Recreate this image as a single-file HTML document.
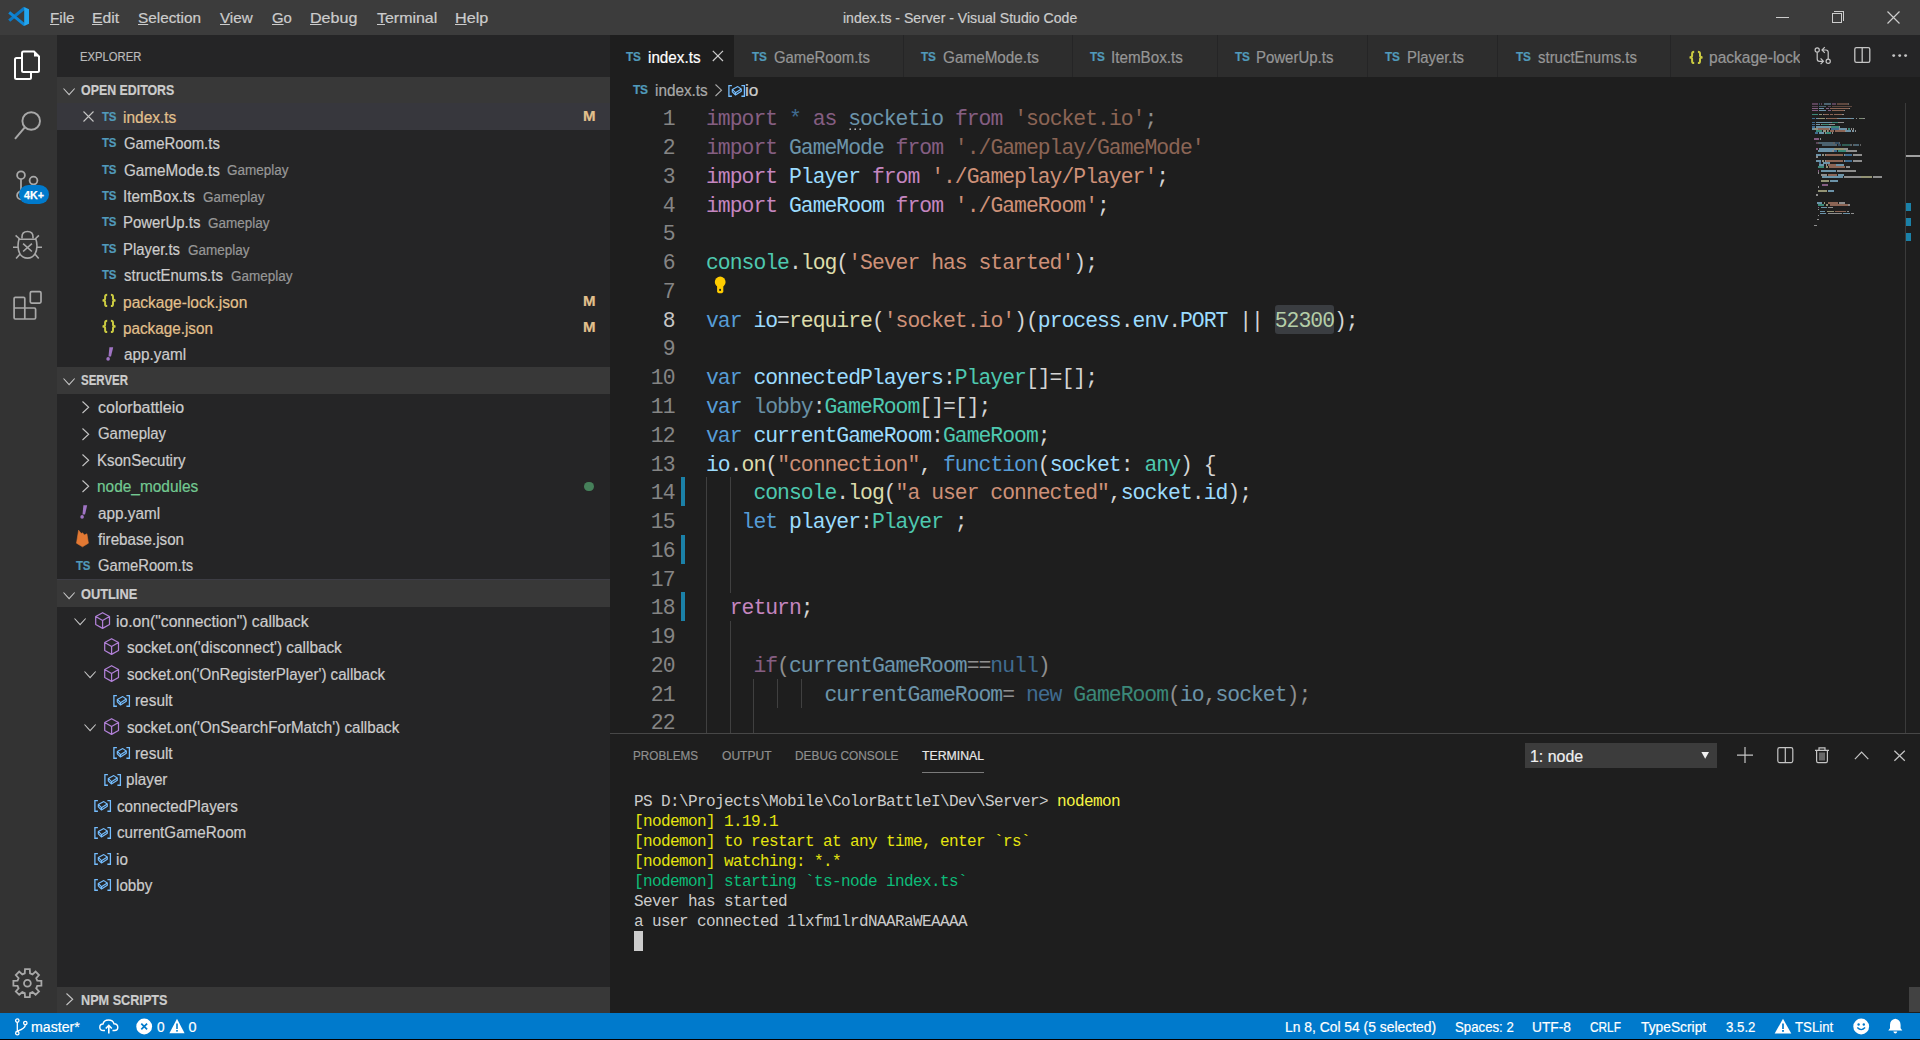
<!DOCTYPE html>
<html><head><meta charset="utf-8"><title>index.ts - Server - Visual Studio Code</title>
<style>
*{margin:0;padding:0;box-sizing:border-box}
html,body{width:1920px;height:1040px;overflow:hidden;background:#1e1e1e}
body{position:relative;font-family:'Liberation Sans',sans-serif;color:#cccccc}
.a{position:absolute}
.t{position:absolute;white-space:pre;line-height:1}
.t.s{-webkit-text-stroke:0.2px currentColor}
svg{position:absolute;overflow:visible}
</style></head>
<body>
<div class="a" style="left:0;top:0;width:1920px;height:35px;background:#3c3c3c"></div>
<svg style="left:0;top:0" width="36" height="35" viewBox="0 0 36 35">
<path d="M9.2 20.6 L24.6 8.0" stroke="#0b78c4" stroke-width="3.1"/>
<path d="M9.2 12.4 L24.6 24.9" stroke="#0f86d6" stroke-width="3.1"/>
<path d="M24.2 7 L29 9.2 V23.8 L24.2 26 Z" fill="#22a6f0"/>
</svg>
<div class="t s" style="left:49.77px;top:11.42px;font-family:'Liberation Sans',sans-serif;font-size:14.8px;line-height:14.8px;color:#cccccc;transform:scaleX(1.0259);transform-origin:0 0;"><span style="text-decoration:underline;text-underline-offset:1.2px;text-decoration-thickness:1px">F</span>ile</div>
<div class="t s" style="left:92.14px;top:11.42px;font-family:'Liberation Sans',sans-serif;font-size:14.8px;line-height:14.8px;color:#cccccc;transform:scaleX(1.0621);transform-origin:0 0;"><span style="text-decoration:underline;text-underline-offset:1.2px;text-decoration-thickness:1px">E</span>dit</div>
<div class="t s" style="left:138.20px;top:11.42px;font-family:'Liberation Sans',sans-serif;font-size:14.8px;line-height:14.8px;color:#cccccc;transform:scaleX(1.0356);transform-origin:0 0;"><span style="text-decoration:underline;text-underline-offset:1.2px;text-decoration-thickness:1px">S</span>election</div>
<div class="t s" style="left:220.20px;top:11.42px;font-family:'Liberation Sans',sans-serif;font-size:14.8px;line-height:14.8px;color:#cccccc;transform:scaleX(1.0274);transform-origin:0 0;"><span style="text-decoration:underline;text-underline-offset:1.2px;text-decoration-thickness:1px">V</span>iew</div>
<div class="t s" style="left:272.40px;top:11.42px;font-family:'Liberation Sans',sans-serif;font-size:14.8px;line-height:14.8px;color:#cccccc;transform:scaleX(1.0046);transform-origin:0 0;"><span style="text-decoration:underline;text-underline-offset:1.2px;text-decoration-thickness:1px">G</span>o</div>
<div class="t s" style="left:310.31px;top:11.42px;font-family:'Liberation Sans',sans-serif;font-size:14.8px;line-height:14.8px;color:#cccccc;transform:scaleX(1.0856);transform-origin:0 0;"><span style="text-decoration:underline;text-underline-offset:1.2px;text-decoration-thickness:1px">D</span>ebug</div>
<div class="t s" style="left:376.60px;top:11.42px;font-family:'Liberation Sans',sans-serif;font-size:14.8px;line-height:14.8px;color:#cccccc;transform:scaleX(1.0768);transform-origin:0 0;"><span style="text-decoration:underline;text-underline-offset:1.2px;text-decoration-thickness:1px">T</span>erminal</div>
<div class="t s" style="left:455.01px;top:11.42px;font-family:'Liberation Sans',sans-serif;font-size:14.8px;line-height:14.8px;color:#cccccc;transform:scaleX(1.0924);transform-origin:0 0;"><span style="text-decoration:underline;text-underline-offset:1.2px;text-decoration-thickness:1px">H</span>elp</div>
<div class="t s" style="left:842.90px;top:11.16px;font-family:'Liberation Sans',sans-serif;font-size:14.4px;line-height:14.4px;color:#cccccc;transform:scaleX(0.9771);transform-origin:0 0;">index.ts - Server - Visual Studio Code</div>
<div class="a" style="left:1776px;top:17px;width:13px;height:1px;background:#cccccc"></div>
<div class="a" style="left:1832px;top:13px;width:10px;height:10px;border:1px solid #cccccc"></div>
<div class="a" style="left:1834px;top:11px;width:10px;height:10px;border-top:1px solid #cccccc;border-right:1px solid #cccccc"></div>
<svg style="left:1887px;top:11px" width="13" height="13" viewBox="0 0 13 13"><path d="M0.5 0.5 L12.5 12.5 M12.5 0.5 L0.5 12.5" stroke="#cccccc" stroke-width="1.2"/></svg>
<div class="a" style="left:0;top:35px;width:57px;height:978px;background:#333333"></div>
<svg style="left:0;top:35px" width="57" height="60" viewBox="0 35 57 60">
<path d="M21.5 58 H16.5 Q15 58 15 59.5 V77.5 Q15 79 16.5 79 H29.5 Q31 79 31 77.5 V72.5" fill="none" stroke="#ffffff" stroke-width="2"/>
<path d="M23.5 51.5 H34 L39 56.5 V70.5 Q39 72 37.5 72 H23.5 Q22 72 22 70.5 V53 Q22 51.5 23.5 51.5 Z" fill="none" stroke="#ffffff" stroke-width="2"/>
<path d="M34 51.5 V56.5 H39 Z" fill="#ffffff"/>
</svg>
<svg style="left:0;top:95px" width="57" height="60" viewBox="0 95 57 60">
<circle cx="31.2" cy="121" r="8.8" fill="none" stroke="#a8a8a8" stroke-width="1.9"/>
<path d="M24.6 127.6 L15 138.8" stroke="#a8a8a8" stroke-width="2" stroke-linecap="butt"/>
</svg>
<svg style="left:0;top:155px" width="57" height="60" viewBox="0 155 57 60">
<circle cx="21" cy="175.2" r="3.9" fill="none" stroke="#a8a8a8" stroke-width="1.8"/>
<circle cx="33.5" cy="180.6" r="3.9" fill="none" stroke="#a8a8a8" stroke-width="1.8"/>
<circle cx="21" cy="195.4" r="3.9" fill="none" stroke="#a8a8a8" stroke-width="1.8"/>
<path d="M21 179.1 V191.5" stroke="#a8a8a8" stroke-width="1.8"/>
</svg>
<div class="a" style="left:19px;top:185px;width:30px;height:19px;border-radius:9.5px;background:#007acc"></div>
<div class="t s" style="left:24.20px;top:190.42px;font-family:'Liberation Sans',sans-serif;font-size:10.8px;line-height:10.8px;color:#ffffff;transform:scaleX(0.9898);transform-origin:0 0;font-weight:bold;-webkit-text-stroke:0.25px #ffffff">4K+</div>
<svg style="left:0;top:215px" width="57" height="60" viewBox="0 215 57 60">
<path d="M22 238.6 V236.8 Q22 231.5 27.5 231.5 Q33 231.5 33 236.8 V238.6" fill="none" stroke="#a8a8a8" stroke-width="1.6"/>
<path d="M19 239.2 H35.9 C37.3 243 37.5 250 35.1 253.8 C33.1 257 30.5 258.1 27.5 258.1 C24.5 258.1 21.9 257 19.9 253.8 C17.5 250 17.7 243 19 239.2 Z" fill="none" stroke="#a8a8a8" stroke-width="1.6"/>
<path d="M23.1 243.6 L31.9 251.5 M31.9 243.6 L23.1 251.5" stroke="#a8a8a8" stroke-width="1.6"/>
<path d="M15.6 235.4 L19.6 239 M38.9 235.4 L35.2 239 M13 247.3 H18 M42 247.3 H37 M16.1 258.5 L20.3 253.7 M38.7 258.5 L34.7 253.7" stroke="#a8a8a8" stroke-width="1.6"/>
</svg>
<svg style="left:0;top:275px" width="57" height="60" viewBox="0 275 57 60">
<path d="M14.1 298.5 Q14.1 297.3 15.3 297.3 H23.6 Q24.8 297.3 24.8 298.5 V308 H34.4 Q35.6 308 35.6 309.2 V317.8 Q35.6 319 34.4 319 H15.3 Q14.1 319 14.1 317.8 Z M14.1 308 H24.8 V319" fill="none" stroke="#a8a8a8" stroke-width="1.7"/>
<rect x="30.3" y="291.7" width="10.7" height="11.4" rx="1.3" fill="none" stroke="#a8a8a8" stroke-width="1.7"/>
</svg>
<svg style="left:0;top:955px" width="57" height="57" viewBox="0 955 57 57">
<polygon points="24.78,973.34 25.00,969.20 29.80,969.20 30.02,973.34 32.52,974.38 35.60,971.61 38.99,975.00 36.22,978.08 37.26,980.58 41.40,980.80 41.40,985.60 37.26,985.82 36.22,988.32 38.99,991.40 35.60,994.79 32.52,992.02 30.02,993.06 29.80,997.20 25.00,997.20 24.78,993.06 22.28,992.02 19.20,994.79 15.81,991.40 18.58,988.32 17.54,985.82 13.40,985.60 13.40,980.80 17.54,980.58 18.58,978.08 15.81,975.00 19.20,971.61 22.28,974.38" fill="none" stroke="#a8a8a8" stroke-width="1.8" stroke-linejoin="miter"/>
<circle cx="27.4" cy="983.2" r="3.4" fill="none" stroke="#a8a8a8" stroke-width="1.8"/>
</svg>
<div class="a" style="left:57px;top:35px;width:553px;height:978px;background:#252526"></div>
<div class="t s" style="left:79.85px;top:49.88px;font-family:'Liberation Sans',sans-serif;font-size:13.2px;line-height:13.2px;color:#bbbbbb;transform:scaleX(0.8535);transform-origin:0 0;">EXPLORER</div>
<div class="a" style="left:57px;top:77px;width:553px;height:26.4px;background:#383838"></div>
<svg style="left:62.8px;top:88.3px" width="12.2" height="7.2" viewBox="0 0 12.2 7.2"><path d="M0.5 0.5 L6.1 6.7 L11.7 0.5" fill="none" stroke="#c5c5c5" stroke-width="1.1"/></svg>
<div class="t s" style="left:80.70px;top:84.37px;font-family:'Liberation Sans',sans-serif;font-size:13.8px;line-height:13.8px;color:#cccccc;transform:scaleX(0.8969);transform-origin:0 0;font-weight:bold">OPEN EDITORS</div>
<div class="a" style="left:57px;top:103.4px;width:553px;height:26.4px;background:#37373d"></div>
<svg style="left:82.5px;top:111.30000000000001px" width="11" height="11" viewBox="0 0 11 11"><path d="M0.5 0.5 L10.5 10.5 M10.5 0.5 L0.5 10.5" stroke="#c5c5c5" stroke-width="1.1"/></svg>
<div class="t s" style="left:102.20px;top:110.79px;font-family:'Liberation Sans',sans-serif;font-size:12.6px;line-height:12.6px;color:#519aba;transform:scaleX(0.9101);transform-origin:0 0;font-weight:bold;letter-spacing:-0.2px">TS</div>
<div class="t s" style="left:123.21px;top:109.84px;font-family:'Liberation Sans',sans-serif;font-size:15.6px;line-height:15.6px;color:#e2c08d;transform:scaleX(0.9916);transform-origin:0 0;">index.ts</div>
<div class="t s" style="left:583.00px;top:108.82px;font-family:'Liberation Sans',sans-serif;font-size:14.8px;line-height:14.8px;color:#e2c08d;transform:scaleX(1.0167);transform-origin:0 0;font-weight:bold">M</div>
<div class="t s" style="left:102.20px;top:137.19px;font-family:'Liberation Sans',sans-serif;font-size:12.6px;line-height:12.6px;color:#519aba;transform:scaleX(0.9101);transform-origin:0 0;font-weight:bold;letter-spacing:-0.2px">TS</div>
<div class="t s" style="left:124.20px;top:136.24px;font-family:'Liberation Sans',sans-serif;font-size:15.6px;line-height:15.6px;color:#cccccc;transform:scaleX(0.9531);transform-origin:0 0;">GameRoom.ts</div>
<div class="t s" style="left:102.20px;top:163.59px;font-family:'Liberation Sans',sans-serif;font-size:12.6px;line-height:12.6px;color:#519aba;transform:scaleX(0.9101);transform-origin:0 0;font-weight:bold;letter-spacing:-0.2px">TS</div>
<div class="t s" style="left:124.20px;top:162.64px;font-family:'Liberation Sans',sans-serif;font-size:15.6px;line-height:15.6px;color:#cccccc;transform:scaleX(0.9782);transform-origin:0 0;">GameMode.ts</div>
<div class="t s" style="left:226.90px;top:163.37px;font-family:'Liberation Sans',sans-serif;font-size:14.04px;line-height:14.04px;color:#979797;transform:scaleX(0.9619);transform-origin:0 0;">Gameplay</div>
<div class="t s" style="left:102.20px;top:189.99px;font-family:'Liberation Sans',sans-serif;font-size:12.6px;line-height:12.6px;color:#519aba;transform:scaleX(0.9101);transform-origin:0 0;font-weight:bold;letter-spacing:-0.2px">TS</div>
<div class="t s" style="left:123.23px;top:189.04px;font-family:'Liberation Sans',sans-serif;font-size:15.6px;line-height:15.6px;color:#cccccc;transform:scaleX(0.9744);transform-origin:0 0;">ItemBox.ts</div>
<div class="t s" style="left:202.50px;top:189.77px;font-family:'Liberation Sans',sans-serif;font-size:14.04px;line-height:14.04px;color:#979797;transform:scaleX(0.9619);transform-origin:0 0;">Gameplay</div>
<div class="t s" style="left:102.20px;top:216.39px;font-family:'Liberation Sans',sans-serif;font-size:12.6px;line-height:12.6px;color:#519aba;transform:scaleX(0.9101);transform-origin:0 0;font-weight:bold;letter-spacing:-0.2px">TS</div>
<div class="t s" style="left:123.24px;top:215.44px;font-family:'Liberation Sans',sans-serif;font-size:15.6px;line-height:15.6px;color:#cccccc;transform:scaleX(0.9599);transform-origin:0 0;">PowerUp.ts</div>
<div class="t s" style="left:208.10px;top:216.17px;font-family:'Liberation Sans',sans-serif;font-size:14.04px;line-height:14.04px;color:#979797;transform:scaleX(0.9619);transform-origin:0 0;">Gameplay</div>
<div class="t s" style="left:102.20px;top:242.79px;font-family:'Liberation Sans',sans-serif;font-size:12.6px;line-height:12.6px;color:#519aba;transform:scaleX(0.9101);transform-origin:0 0;font-weight:bold;letter-spacing:-0.2px">TS</div>
<div class="t s" style="left:123.25px;top:241.84px;font-family:'Liberation Sans',sans-serif;font-size:15.6px;line-height:15.6px;color:#cccccc;transform:scaleX(0.9525);transform-origin:0 0;">Player.ts</div>
<div class="t s" style="left:187.75px;top:242.57px;font-family:'Liberation Sans',sans-serif;font-size:14.04px;line-height:14.04px;color:#979797;transform:scaleX(0.9619);transform-origin:0 0;">Gameplay</div>
<div class="t s" style="left:102.20px;top:269.19px;font-family:'Liberation Sans',sans-serif;font-size:12.6px;line-height:12.6px;color:#519aba;transform:scaleX(0.9101);transform-origin:0 0;font-weight:bold;letter-spacing:-0.2px">TS</div>
<div class="t s" style="left:124.20px;top:268.24px;font-family:'Liberation Sans',sans-serif;font-size:15.6px;line-height:15.6px;color:#cccccc;transform:scaleX(0.9591);transform-origin:0 0;">structEnums.ts</div>
<div class="t s" style="left:230.60px;top:268.97px;font-family:'Liberation Sans',sans-serif;font-size:14.04px;line-height:14.04px;color:#979797;transform:scaleX(0.9619);transform-origin:0 0;">Gameplay</div>
<svg style="left:102px;top:294.0px" width="15" height="13" viewBox="0 0 15 13"><path d="M5.2 0.8 Q3.1 0.8 3.1 2.7 V4.8 Q3.1 6.1 0.6 6.4 Q3.1 6.7 3.1 8 V10.2 Q3.1 12.1 5.2 12.1 M8.9 0.8 Q11 0.8 11 2.7 V4.8 Q11 6.1 13.5 6.4 Q11 6.7 11 8 V10.2 Q11 12.1 8.9 12.1" fill="none" stroke="#cbcb41" stroke-width="2" stroke-linejoin="miter"/></svg>
<div class="t s" style="left:123.20px;top:294.64px;font-family:'Liberation Sans',sans-serif;font-size:15.6px;line-height:15.6px;color:#e2c08d;transform:scaleX(0.9964);transform-origin:0 0;">package-lock.json</div>
<div class="t s" style="left:583.00px;top:293.62px;font-family:'Liberation Sans',sans-serif;font-size:14.8px;line-height:14.8px;color:#e2c08d;transform:scaleX(1.0167);transform-origin:0 0;font-weight:bold">M</div>
<svg style="left:102px;top:320.40000000000003px" width="15" height="13" viewBox="0 0 15 13"><path d="M5.2 0.8 Q3.1 0.8 3.1 2.7 V4.8 Q3.1 6.1 0.6 6.4 Q3.1 6.7 3.1 8 V10.2 Q3.1 12.1 5.2 12.1 M8.9 0.8 Q11 0.8 11 2.7 V4.8 Q11 6.1 13.5 6.4 Q11 6.7 11 8 V10.2 Q11 12.1 8.9 12.1" fill="none" stroke="#cbcb41" stroke-width="2" stroke-linejoin="miter"/></svg>
<div class="t s" style="left:123.22px;top:321.04px;font-family:'Liberation Sans',sans-serif;font-size:15.6px;line-height:15.6px;color:#e2c08d;transform:scaleX(0.9787);transform-origin:0 0;">package.json</div>
<div class="t s" style="left:583.00px;top:320.02px;font-family:'Liberation Sans',sans-serif;font-size:14.8px;line-height:14.8px;color:#e2c08d;transform:scaleX(1.0167);transform-origin:0 0;font-weight:bold">M</div>
<svg style="left:105.8px;top:347.0px" width="8" height="14" viewBox="0 0 8 14"><path d="M3.4 0.3 H7.2 L5.0 9.4 H2.5 Z" fill="#a074c4"/><circle cx="2.1" cy="11.9" r="1.8" fill="#a074c4"/></svg>
<div class="t s" style="left:124.20px;top:347.44px;font-family:'Liberation Sans',sans-serif;font-size:15.6px;line-height:15.6px;color:#cccccc;transform:scaleX(0.9808);transform-origin:0 0;">app.yaml</div>
<div class="a" style="left:57px;top:366.9px;width:553px;height:26.9px;background:#383838"></div>
<svg style="left:62.8px;top:378.2px" width="12.2" height="7.2" viewBox="0 0 12.2 7.2"><path d="M0.5 0.5 L6.1 6.7 L11.7 0.5" fill="none" stroke="#c5c5c5" stroke-width="1.1"/></svg>
<div class="t s" style="left:80.70px;top:374.27px;font-family:'Liberation Sans',sans-serif;font-size:13.8px;line-height:13.8px;color:#cccccc;transform:scaleX(0.8333);transform-origin:0 0;font-weight:bold">SERVER</div>
<svg style="left:82px;top:401.2px" width="7.2" height="12.5" viewBox="0 0 7.2 12.5"><path d="M0.5 0.5 L6.7 6.25 L0.5 12.0" fill="none" stroke="#c5c5c5" stroke-width="1.1"/></svg>
<div class="t s" style="left:97.70px;top:400.04px;font-family:'Liberation Sans',sans-serif;font-size:15.6px;line-height:15.6px;color:#cccccc;transform:scaleX(1.0248);transform-origin:0 0;">colorbattleio</div>
<svg style="left:82px;top:427.59999999999997px" width="7.2" height="12.5" viewBox="0 0 7.2 12.5"><path d="M0.5 0.5 L6.7 6.25 L0.5 12.0" fill="none" stroke="#c5c5c5" stroke-width="1.1"/></svg>
<div class="t s" style="left:97.70px;top:426.44px;font-family:'Liberation Sans',sans-serif;font-size:15.6px;line-height:15.6px;color:#cccccc;transform:scaleX(0.9569);transform-origin:0 0;">Gameplay</div>
<svg style="left:82px;top:454.0px" width="7.2" height="12.5" viewBox="0 0 7.2 12.5"><path d="M0.5 0.5 L6.7 6.25 L0.5 12.0" fill="none" stroke="#c5c5c5" stroke-width="1.1"/></svg>
<div class="t s" style="left:96.74px;top:452.84px;font-family:'Liberation Sans',sans-serif;font-size:15.6px;line-height:15.6px;color:#cccccc;transform:scaleX(0.9629);transform-origin:0 0;">KsonSecutiry</div>
<svg style="left:82px;top:480.4px" width="7.2" height="12.5" viewBox="0 0 7.2 12.5"><path d="M0.5 0.5 L6.7 6.25 L0.5 12.0" fill="none" stroke="#c5c5c5" stroke-width="1.1"/></svg>
<div class="t s" style="left:96.71px;top:479.24px;font-family:'Liberation Sans',sans-serif;font-size:15.6px;line-height:15.6px;color:#73c991;transform:scaleX(0.9891);transform-origin:0 0;">node_modules</div>
<div class="a" style="left:584px;top:481.8px;width:9.5px;height:9.5px;border-radius:50%;background:#46805a"></div>
<svg style="left:79.6px;top:505.4px" width="8" height="14" viewBox="0 0 8 14"><path d="M3.4 0.3 H7.2 L5.0 9.4 H2.5 Z" fill="#a074c4"/><circle cx="2.1" cy="11.9" r="1.8" fill="#a074c4"/></svg>
<div class="t s" style="left:97.70px;top:505.64px;font-family:'Liberation Sans',sans-serif;font-size:15.6px;line-height:15.6px;color:#cccccc;transform:scaleX(0.9808);transform-origin:0 0;">app.yaml</div>
<svg style="left:70px;top:525.00px" width="25" height="25" viewBox="0 0 25 25"><path d="M8.6 5.2 L11.2 8.6 L12.5 7.8 L14.4 10 L16.9 8.8 L18.4 18.2 L12.5 21.8 L6.5 18.2 Z" fill="#e37933" stroke="#e37933" stroke-width="0.6" stroke-linejoin="round"/></svg>
<div class="t s" style="left:97.70px;top:532.04px;font-family:'Liberation Sans',sans-serif;font-size:15.6px;line-height:15.6px;color:#cccccc;transform:scaleX(0.9733);transform-origin:0 0;">firebase.json</div>
<div class="t s" style="left:75.70px;top:559.59px;font-family:'Liberation Sans',sans-serif;font-size:12.6px;line-height:12.6px;color:#519aba;transform:scaleX(0.9101);transform-origin:0 0;font-weight:bold;letter-spacing:-0.2px">TS</div>
<div class="t s" style="left:97.70px;top:558.44px;font-family:'Liberation Sans',sans-serif;font-size:15.6px;line-height:15.6px;color:#cccccc;transform:scaleX(0.9471);transform-origin:0 0;">GameRoom.ts</div>
<div class="a" style="left:57px;top:579px;width:553px;height:27.6px;background:#383838"></div>
<div class="a" style="left:57px;top:579px;width:553px;height:1.3px;background:#3d3d44"></div>
<svg style="left:62.8px;top:592.2px" width="12.2" height="7.2" viewBox="0 0 12.2 7.2"><path d="M0.5 0.5 L6.1 6.7 L11.7 0.5" fill="none" stroke="#c5c5c5" stroke-width="1.1"/></svg>
<div class="t s" style="left:80.70px;top:588.27px;font-family:'Liberation Sans',sans-serif;font-size:13.8px;line-height:13.8px;color:#cccccc;transform:scaleX(0.9280);transform-origin:0 0;font-weight:bold">OUTLINE</div>
<svg style="left:73.8px;top:617.9px" width="12.2" height="7.2" viewBox="0 0 12.2 7.2"><path d="M0.5 0.5 L6.1 6.7 L11.7 0.5" fill="none" stroke="#c5c5c5" stroke-width="1.1"/></svg>
<svg style="left:95.1px;top:612.0px" width="16" height="18" viewBox="0 0 16 18"><path d="M7.6 0.7 L14.5 4.5 V12.5 L7.6 16.4 L0.7 12.5 V4.5 Z M0.7 4.5 L7.6 8.5 L14.5 4.5 M7.6 8.5 V16.4" fill="none" stroke="#b180d7" stroke-width="1.25" stroke-linejoin="round"/></svg>
<div class="t s" style="left:115.69px;top:613.94px;font-family:'Liberation Sans',sans-serif;font-size:15.6px;line-height:15.6px;color:#cccccc;transform:scaleX(1.0059);transform-origin:0 0;">io.on("connection") callback</div>
<svg style="left:104.2px;top:638.4px" width="16" height="18" viewBox="0 0 16 18"><path d="M7.6 0.7 L14.5 4.5 V12.5 L7.6 16.4 L0.7 12.5 V4.5 Z M0.7 4.5 L7.6 8.5 L14.5 4.5 M7.6 8.5 V16.4" fill="none" stroke="#b180d7" stroke-width="1.25" stroke-linejoin="round"/></svg>
<div class="t s" style="left:126.70px;top:640.34px;font-family:'Liberation Sans',sans-serif;font-size:15.6px;line-height:15.6px;color:#cccccc;transform:scaleX(0.9839);transform-origin:0 0;">socket.on('disconnect') callback</div>
<svg style="left:83.6px;top:670.6999999999999px" width="12.2" height="7.2" viewBox="0 0 12.2 7.2"><path d="M0.5 0.5 L6.1 6.7 L11.7 0.5" fill="none" stroke="#c5c5c5" stroke-width="1.1"/></svg>
<svg style="left:104.2px;top:664.8px" width="16" height="18" viewBox="0 0 16 18"><path d="M7.6 0.7 L14.5 4.5 V12.5 L7.6 16.4 L0.7 12.5 V4.5 Z M0.7 4.5 L7.6 8.5 L14.5 4.5 M7.6 8.5 V16.4" fill="none" stroke="#b180d7" stroke-width="1.25" stroke-linejoin="round"/></svg>
<div class="t s" style="left:126.70px;top:666.74px;font-family:'Liberation Sans',sans-serif;font-size:15.6px;line-height:15.6px;color:#cccccc;transform:scaleX(0.9673);transform-origin:0 0;">socket.on('OnRegisterPlayer') callback</div>
<svg style="left:113.20px;top:694.60px" width="18" height="13" viewBox="0 0 18 13"><path d="M3.9 0.65 H0.9 V11.25 H3.9 M13.4 0.65 H16.4 V11.25 H13.4" fill="none" stroke="#75beff" stroke-width="1.3"/><path d="M4.3 4.4 L9.8 1.6 L13.3 4.0 L7.5 7.7 Z M4.3 4.4 V6.9 L7.5 10 L13.3 6.2 V4.0 M7.5 7.7 V10" fill="none" stroke="#75beff" stroke-width="1.15" stroke-linejoin="round"/></svg>
<div class="t s" style="left:135.31px;top:693.14px;font-family:'Liberation Sans',sans-serif;font-size:15.6px;line-height:15.6px;color:#cccccc;transform:scaleX(0.9868);transform-origin:0 0;">result</div>
<svg style="left:83.6px;top:723.5px" width="12.2" height="7.2" viewBox="0 0 12.2 7.2"><path d="M0.5 0.5 L6.1 6.7 L11.7 0.5" fill="none" stroke="#c5c5c5" stroke-width="1.1"/></svg>
<svg style="left:104.2px;top:717.6px" width="16" height="18" viewBox="0 0 16 18"><path d="M7.6 0.7 L14.5 4.5 V12.5 L7.6 16.4 L0.7 12.5 V4.5 Z M0.7 4.5 L7.6 8.5 L14.5 4.5 M7.6 8.5 V16.4" fill="none" stroke="#b180d7" stroke-width="1.25" stroke-linejoin="round"/></svg>
<div class="t s" style="left:126.70px;top:719.54px;font-family:'Liberation Sans',sans-serif;font-size:15.6px;line-height:15.6px;color:#cccccc;transform:scaleX(0.9731);transform-origin:0 0;">socket.on('OnSearchForMatch') callback</div>
<svg style="left:113.20px;top:747.40px" width="18" height="13" viewBox="0 0 18 13"><path d="M3.9 0.65 H0.9 V11.25 H3.9 M13.4 0.65 H16.4 V11.25 H13.4" fill="none" stroke="#75beff" stroke-width="1.3"/><path d="M4.3 4.4 L9.8 1.6 L13.3 4.0 L7.5 7.7 Z M4.3 4.4 V6.9 L7.5 10 L13.3 6.2 V4.0 M7.5 7.7 V10" fill="none" stroke="#75beff" stroke-width="1.15" stroke-linejoin="round"/></svg>
<div class="t s" style="left:135.31px;top:745.94px;font-family:'Liberation Sans',sans-serif;font-size:15.6px;line-height:15.6px;color:#cccccc;transform:scaleX(0.9868);transform-origin:0 0;">result</div>
<svg style="left:103.50px;top:773.80px" width="18" height="13" viewBox="0 0 18 13"><path d="M3.9 0.65 H0.9 V11.25 H3.9 M13.4 0.65 H16.4 V11.25 H13.4" fill="none" stroke="#75beff" stroke-width="1.3"/><path d="M4.3 4.4 L9.8 1.6 L13.3 4.0 L7.5 7.7 Z M4.3 4.4 V6.9 L7.5 10 L13.3 6.2 V4.0 M7.5 7.7 V10" fill="none" stroke="#75beff" stroke-width="1.15" stroke-linejoin="round"/></svg>
<div class="t s" style="left:125.73px;top:772.34px;font-family:'Liberation Sans',sans-serif;font-size:15.6px;line-height:15.6px;color:#cccccc;transform:scaleX(0.9750);transform-origin:0 0;">player</div>
<svg style="left:93.80px;top:800.20px" width="18" height="13" viewBox="0 0 18 13"><path d="M3.9 0.65 H0.9 V11.25 H3.9 M13.4 0.65 H16.4 V11.25 H13.4" fill="none" stroke="#75beff" stroke-width="1.3"/><path d="M4.3 4.4 L9.8 1.6 L13.3 4.0 L7.5 7.7 Z M4.3 4.4 V6.9 L7.5 10 L13.3 6.2 V4.0 M7.5 7.7 V10" fill="none" stroke="#75beff" stroke-width="1.15" stroke-linejoin="round"/></svg>
<div class="t s" style="left:116.70px;top:798.74px;font-family:'Liberation Sans',sans-serif;font-size:15.6px;line-height:15.6px;color:#cccccc;transform:scaleX(0.9750);transform-origin:0 0;">connectedPlayers</div>
<svg style="left:93.80px;top:826.60px" width="18" height="13" viewBox="0 0 18 13"><path d="M3.9 0.65 H0.9 V11.25 H3.9 M13.4 0.65 H16.4 V11.25 H13.4" fill="none" stroke="#75beff" stroke-width="1.3"/><path d="M4.3 4.4 L9.8 1.6 L13.3 4.0 L7.5 7.7 Z M4.3 4.4 V6.9 L7.5 10 L13.3 6.2 V4.0 M7.5 7.7 V10" fill="none" stroke="#75beff" stroke-width="1.15" stroke-linejoin="round"/></svg>
<div class="t s" style="left:116.70px;top:825.14px;font-family:'Liberation Sans',sans-serif;font-size:15.6px;line-height:15.6px;color:#cccccc;transform:scaleX(0.9750);transform-origin:0 0;">currentGameRoom</div>
<svg style="left:93.80px;top:853.00px" width="18" height="13" viewBox="0 0 18 13"><path d="M3.9 0.65 H0.9 V11.25 H3.9 M13.4 0.65 H16.4 V11.25 H13.4" fill="none" stroke="#75beff" stroke-width="1.3"/><path d="M4.3 4.4 L9.8 1.6 L13.3 4.0 L7.5 7.7 Z M4.3 4.4 V6.9 L7.5 10 L13.3 6.2 V4.0 M7.5 7.7 V10" fill="none" stroke="#75beff" stroke-width="1.15" stroke-linejoin="round"/></svg>
<div class="t s" style="left:115.73px;top:851.54px;font-family:'Liberation Sans',sans-serif;font-size:15.6px;line-height:15.6px;color:#cccccc;transform:scaleX(0.9750);transform-origin:0 0;">io</div>
<svg style="left:93.80px;top:879.40px" width="18" height="13" viewBox="0 0 18 13"><path d="M3.9 0.65 H0.9 V11.25 H3.9 M13.4 0.65 H16.4 V11.25 H13.4" fill="none" stroke="#75beff" stroke-width="1.3"/><path d="M4.3 4.4 L9.8 1.6 L13.3 4.0 L7.5 7.7 Z M4.3 4.4 V6.9 L7.5 10 L13.3 6.2 V4.0 M7.5 7.7 V10" fill="none" stroke="#75beff" stroke-width="1.15" stroke-linejoin="round"/></svg>
<div class="t s" style="left:115.73px;top:877.94px;font-family:'Liberation Sans',sans-serif;font-size:15.6px;line-height:15.6px;color:#cccccc;transform:scaleX(0.9750);transform-origin:0 0;">lobby</div>
<div class="a" style="left:57px;top:986.6px;width:553px;height:26.4px;background:#383838"></div>
<svg style="left:66.2px;top:993.4px" width="7.2" height="12.5" viewBox="0 0 7.2 12.5"><path d="M0.5 0.5 L6.7 6.25 L0.5 12.0" fill="none" stroke="#c5c5c5" stroke-width="1.1"/></svg>
<div class="t s" style="left:80.70px;top:993.87px;font-family:'Liberation Sans',sans-serif;font-size:13.8px;line-height:13.8px;color:#cccccc;transform:scaleX(0.9173);transform-origin:0 0;font-weight:bold">NPM SCRIPTS</div>
<div class="a" style="left:610px;top:35px;width:1310px;height:42px;background:#252526"></div>
<div class="a" style="left:610px;top:35px;width:124px;height:42px;background:#1e1e1e"></div>
<div class="t s" style="left:626.10px;top:50.89px;font-family:'Liberation Sans',sans-serif;font-size:12.6px;line-height:12.6px;color:#519aba;transform:scaleX(0.9359);transform-origin:0 0;font-weight:bold;letter-spacing:-0.2px">TS</div>
<div class="t s" style="left:647.77px;top:49.54px;font-family:'Liberation Sans',sans-serif;font-size:15.6px;line-height:15.6px;color:#ffffff;transform:scaleX(0.9775);transform-origin:0 0;">index.ts</div>
<svg style="left:712px;top:50.3px" width="12" height="12" viewBox="0 0 12 12"><path d="M0.8 0.8 L11 11 M11 0.8 L0.8 11" stroke="#cccccc" stroke-width="1.2"/></svg>
<div class="a" style="left:734px;top:35px;width:169px;height:42px;background:#2d2d2d;overflow:hidden">
<div class="t s" style="left:17.70px;top:15.89px;font-family:'Liberation Sans',sans-serif;font-size:12.6px;line-height:12.6px;color:#519aba;transform:scaleX(0.9359);transform-origin:0 0;font-weight:bold;letter-spacing:-0.2px">TS</div>
<div class="t s" style="left:40.20px;top:14.54px;font-family:'Liberation Sans',sans-serif;font-size:15.6px;line-height:15.6px;color:#969696;transform:scaleX(0.9541);transform-origin:0 0;">GameRoom.ts</div>
</div>
<div class="a" style="left:904px;top:35px;width:168px;height:42px;background:#2d2d2d;overflow:hidden">
<div class="t s" style="left:17.00px;top:15.89px;font-family:'Liberation Sans',sans-serif;font-size:12.6px;line-height:12.6px;color:#519aba;transform:scaleX(0.9359);transform-origin:0 0;font-weight:bold;letter-spacing:-0.2px">TS</div>
<div class="t s" style="left:39.00px;top:14.54px;font-family:'Liberation Sans',sans-serif;font-size:15.6px;line-height:15.6px;color:#969696;transform:scaleX(0.9803);transform-origin:0 0;">GameMode.ts</div>
</div>
<div class="a" style="left:1073px;top:35px;width:144px;height:42px;background:#2d2d2d;overflow:hidden">
<div class="t s" style="left:17.00px;top:15.89px;font-family:'Liberation Sans',sans-serif;font-size:12.6px;line-height:12.6px;color:#519aba;transform:scaleX(0.9359);transform-origin:0 0;font-weight:bold;letter-spacing:-0.2px">TS</div>
<div class="t s" style="left:38.43px;top:14.54px;font-family:'Liberation Sans',sans-serif;font-size:15.6px;line-height:15.6px;color:#969696;transform:scaleX(0.9744);transform-origin:0 0;">ItemBox.ts</div>
</div>
<div class="a" style="left:1218px;top:35px;width:149px;height:42px;background:#2d2d2d;overflow:hidden">
<div class="t s" style="left:17.00px;top:15.89px;font-family:'Liberation Sans',sans-serif;font-size:12.6px;line-height:12.6px;color:#519aba;transform:scaleX(0.9359);transform-origin:0 0;font-weight:bold;letter-spacing:-0.2px">TS</div>
<div class="t s" style="left:38.44px;top:14.54px;font-family:'Liberation Sans',sans-serif;font-size:15.6px;line-height:15.6px;color:#969696;transform:scaleX(0.9599);transform-origin:0 0;">PowerUp.ts</div>
</div>
<div class="a" style="left:1368px;top:35px;width:129px;height:42px;background:#2d2d2d;overflow:hidden">
<div class="t s" style="left:17.00px;top:15.89px;font-family:'Liberation Sans',sans-serif;font-size:12.6px;line-height:12.6px;color:#519aba;transform:scaleX(0.9359);transform-origin:0 0;font-weight:bold;letter-spacing:-0.2px">TS</div>
<div class="t s" style="left:38.55px;top:14.54px;font-family:'Liberation Sans',sans-serif;font-size:15.6px;line-height:15.6px;color:#969696;transform:scaleX(0.9525);transform-origin:0 0;">Player.ts</div>
</div>
<div class="a" style="left:1498px;top:35px;width:172px;height:42px;background:#2d2d2d;overflow:hidden">
<div class="t s" style="left:17.50px;top:15.89px;font-family:'Liberation Sans',sans-serif;font-size:12.6px;line-height:12.6px;color:#519aba;transform:scaleX(0.9359);transform-origin:0 0;font-weight:bold;letter-spacing:-0.2px">TS</div>
<div class="t s" style="left:39.50px;top:14.54px;font-family:'Liberation Sans',sans-serif;font-size:15.6px;line-height:15.6px;color:#969696;transform:scaleX(0.9591);transform-origin:0 0;">structEnums.ts</div>
</div>
<div class="a" style="left:1671px;top:35px;width:129px;height:42px;background:#2d2d2d;overflow:hidden">
<svg style="left:17.5px;top:15.5px" width="15" height="13" viewBox="0 0 15 13"><path d="M5.2 0.8 Q3.1 0.8 3.1 2.7 V4.8 Q3.1 6.1 0.6 6.4 Q3.1 6.7 3.1 8 V10.2 Q3.1 12.1 5.2 12.1 M8.9 0.8 Q11 0.8 11 2.7 V4.8 Q11 6.1 13.5 6.4 Q11 6.7 11 8 V10.2 Q11 12.1 8.9 12.1" fill="none" stroke="#cbcb41" stroke-width="2" stroke-linejoin="miter"/></svg>
<div class="t s" style="left:38.40px;top:14.54px;font-family:'Liberation Sans',sans-serif;font-size:15.6px;line-height:15.6px;color:#969696;transform:scaleX(0.9964);transform-origin:0 0;">package-lock.json</div>
</div>
<div class="a" style="left:1801px;top:35px;width:119px;height:42px;background:#252526"></div>
<svg style="left:1800px;top:40px" width="120" height="35" viewBox="1800 40 120 35">
<circle cx="1817.2" cy="50" r="2.1" fill="none" stroke="#c5c5c5" stroke-width="1.2"/>
<circle cx="1828.2" cy="61.3" r="2.1" fill="none" stroke="#c5c5c5" stroke-width="1.2"/>
<path d="M1817.2 52.2 V59 Q1817.2 61.3 1819.5 61.3 H1823.2 M1820.6 58.4 L1823.4 61.3 L1820.6 64.1" fill="none" stroke="#c5c5c5" stroke-width="1.2"/>
<path d="M1828.2 59.1 V52.3 Q1828.2 50 1825.9 50 H1822.2 M1824.8 47.2 L1822 50 L1824.8 52.8" fill="none" stroke="#c5c5c5" stroke-width="1.2"/>
<rect x="1854.8" y="47.6" width="15" height="14.8" rx="1.6" fill="none" stroke="#c5c5c5" stroke-width="1.3"/>
<path d="M1862.2 47.6 V62.4" stroke="#c5c5c5" stroke-width="1.3"/>
<circle cx="1893.7" cy="55.6" r="1.45" fill="#c5c5c5"/><circle cx="1899.7" cy="55.6" r="1.45" fill="#c5c5c5"/><circle cx="1905.6" cy="55.6" r="1.45" fill="#c5c5c5"/>
</svg>
<div class="a" style="left:610px;top:77px;width:1310px;height:26.4px;background:#1e1e1e"></div>
<div class="t s" style="left:633.10px;top:83.84px;font-family:'Liberation Sans',sans-serif;font-size:12.6px;line-height:12.6px;color:#519aba;transform:scaleX(0.9488);transform-origin:0 0;font-weight:bold;letter-spacing:-0.2px">TS</div>
<div class="t s" style="left:654.92px;top:83.04px;font-family:'Liberation Sans',sans-serif;font-size:15.6px;line-height:15.6px;color:#a9a9a9;transform:scaleX(0.9803);transform-origin:0 0;">index.ts</div>
<svg style="left:714.5px;top:84px" width="8" height="13" viewBox="0 0 8 13"><path d="M0.5 0.5 L6.5 6.2 L0.5 12" fill="none" stroke="#a9a9a9" stroke-width="1.1"/></svg>
<svg style="left:727.60px;top:84.60px" width="18" height="13" viewBox="0 0 18 13"><path d="M3.9 0.65 H0.9 V11.25 H3.9 M13.4 0.65 H16.4 V11.25 H13.4" fill="none" stroke="#75beff" stroke-width="1.3"/><path d="M4.3 4.4 L9.8 1.6 L13.3 4.0 L7.5 7.7 Z M4.3 4.4 V6.9 L7.5 10 L13.3 6.2 V4.0 M7.5 7.7 V10" fill="none" stroke="#75beff" stroke-width="1.15" stroke-linejoin="round"/></svg>
<div class="t s" style="left:745.19px;top:83.04px;font-family:'Liberation Sans',sans-serif;font-size:15.6px;line-height:15.6px;color:#cccccc;transform:scaleX(1.1078);transform-origin:0 0;">io</div>
<div class="a" style="left:610px;top:103.4px;width:1310px;height:629.6px;background:#1e1e1e;overflow:hidden">
<div class="a" style="left:664.80px;top:201.39px;width:59.25px;height:28.77px;background:#3a3d41;border-radius:3px"></div>
<div class="t" style="left:0;width:64.5px;text-align:right;top:1.90px;letter-spacing:-0.990px;height:28.77px;line-height:28.77px;font-family:'Liberation Mono',monospace;font-size:21.4px;color:#858585">1</div>
<div class="t" style="left:96px;top:1.90px;height:28.77px;line-height:28.77px;font-family:'Liberation Mono',monospace;font-size:21.4px;letter-spacing:-0.990px;opacity:0.62;"><span style="color:#c586c0">import</span><span style="color:#d4d4d4"> </span><span style="color:#569cd6">*</span><span style="color:#d4d4d4"> </span><span style="color:#c586c0">as</span><span style="color:#d4d4d4"> </span><span style="color:#9cdcfe">socketio</span><span style="color:#d4d4d4"> </span><span style="color:#c586c0">from</span><span style="color:#d4d4d4"> </span><span style="color:#ce9178">'socket.io'</span><span style="color:#d4d4d4">;</span></div>
<div class="t" style="left:0;width:64.5px;text-align:right;top:30.67px;letter-spacing:-0.990px;height:28.77px;line-height:28.77px;font-family:'Liberation Mono',monospace;font-size:21.4px;color:#858585">2</div>
<div class="t" style="left:96px;top:30.67px;height:28.77px;line-height:28.77px;font-family:'Liberation Mono',monospace;font-size:21.4px;letter-spacing:-0.990px;opacity:0.62;"><span style="color:#c586c0">import</span><span style="color:#d4d4d4"> </span><span style="color:#9cdcfe">GameMode</span><span style="color:#d4d4d4"> </span><span style="color:#c586c0">from</span><span style="color:#d4d4d4"> </span><span style="color:#ce9178">'./Gameplay/GameMode'</span></div>
<div class="t" style="left:0;width:64.5px;text-align:right;top:59.44px;letter-spacing:-0.990px;height:28.77px;line-height:28.77px;font-family:'Liberation Mono',monospace;font-size:21.4px;color:#858585">3</div>
<div class="t" style="left:96px;top:59.44px;height:28.77px;line-height:28.77px;font-family:'Liberation Mono',monospace;font-size:21.4px;letter-spacing:-0.990px;"><span style="color:#c586c0">import</span><span style="color:#d4d4d4"> </span><span style="color:#9cdcfe">Player</span><span style="color:#d4d4d4"> </span><span style="color:#c586c0">from</span><span style="color:#d4d4d4"> </span><span style="color:#ce9178">'./Gameplay/Player'</span><span style="color:#d4d4d4">;</span></div>
<div class="t" style="left:0;width:64.5px;text-align:right;top:88.21px;letter-spacing:-0.990px;height:28.77px;line-height:28.77px;font-family:'Liberation Mono',monospace;font-size:21.4px;color:#858585">4</div>
<div class="t" style="left:96px;top:88.21px;height:28.77px;line-height:28.77px;font-family:'Liberation Mono',monospace;font-size:21.4px;letter-spacing:-0.990px;"><span style="color:#c586c0">import</span><span style="color:#d4d4d4"> </span><span style="color:#9cdcfe">GameRoom</span><span style="color:#d4d4d4"> </span><span style="color:#c586c0">from</span><span style="color:#d4d4d4"> </span><span style="color:#ce9178">'./GameRoom'</span><span style="color:#d4d4d4">;</span></div>
<div class="t" style="left:0;width:64.5px;text-align:right;top:116.98px;letter-spacing:-0.990px;height:28.77px;line-height:28.77px;font-family:'Liberation Mono',monospace;font-size:21.4px;color:#858585">5</div>
<div class="t" style="left:0;width:64.5px;text-align:right;top:145.75px;letter-spacing:-0.990px;height:28.77px;line-height:28.77px;font-family:'Liberation Mono',monospace;font-size:21.4px;color:#858585">6</div>
<div class="t" style="left:96px;top:145.75px;height:28.77px;line-height:28.77px;font-family:'Liberation Mono',monospace;font-size:21.4px;letter-spacing:-0.990px;"><span style="color:#4ec9b0">console</span><span style="color:#d4d4d4">.</span><span style="color:#dcdcaa">log</span><span style="color:#d4d4d4">(</span><span style="color:#ce9178">'Sever has started'</span><span style="color:#d4d4d4">);</span></div>
<div class="t" style="left:0;width:64.5px;text-align:right;top:174.52px;letter-spacing:-0.990px;height:28.77px;line-height:28.77px;font-family:'Liberation Mono',monospace;font-size:21.4px;color:#858585">7</div>
<div class="t" style="left:0;width:64.5px;text-align:right;top:203.29px;letter-spacing:-0.990px;height:28.77px;line-height:28.77px;font-family:'Liberation Mono',monospace;font-size:21.4px;color:#c6c6c6">8</div>
<div class="t" style="left:96px;top:203.29px;height:28.77px;line-height:28.77px;font-family:'Liberation Mono',monospace;font-size:21.4px;letter-spacing:-0.990px;"><span style="color:#569cd6">var</span><span style="color:#d4d4d4"> </span><span style="color:#9cdcfe">io</span><span style="color:#d4d4d4">=</span><span style="color:#dcdcaa">require</span><span style="color:#d4d4d4">(</span><span style="color:#ce9178">'socket.io'</span><span style="color:#d4d4d4">)(</span><span style="color:#9cdcfe">process</span><span style="color:#d4d4d4">.</span><span style="color:#9cdcfe">env</span><span style="color:#d4d4d4">.</span><span style="color:#9cdcfe">PORT</span><span style="color:#d4d4d4"> || </span><span style="color:#b5cea8">52300</span><span style="color:#d4d4d4">);</span></div>
<div class="t" style="left:0;width:64.5px;text-align:right;top:232.06px;letter-spacing:-0.990px;height:28.77px;line-height:28.77px;font-family:'Liberation Mono',monospace;font-size:21.4px;color:#858585">9</div>
<div class="t" style="left:0;width:64.5px;text-align:right;top:260.83px;letter-spacing:-0.990px;height:28.77px;line-height:28.77px;font-family:'Liberation Mono',monospace;font-size:21.4px;color:#858585">10</div>
<div class="t" style="left:96px;top:260.83px;height:28.77px;line-height:28.77px;font-family:'Liberation Mono',monospace;font-size:21.4px;letter-spacing:-0.990px;"><span style="color:#569cd6">var</span><span style="color:#d4d4d4"> </span><span style="color:#9cdcfe">connectedPlayers</span><span style="color:#d4d4d4">:</span><span style="color:#4ec9b0">Player</span><span style="color:#d4d4d4">[]=[];</span></div>
<div class="t" style="left:0;width:64.5px;text-align:right;top:289.60px;letter-spacing:-0.990px;height:28.77px;line-height:28.77px;font-family:'Liberation Mono',monospace;font-size:21.4px;color:#858585">11</div>
<div class="t" style="left:96px;top:289.60px;height:28.77px;line-height:28.77px;font-family:'Liberation Mono',monospace;font-size:21.4px;letter-spacing:-0.990px;"><span style="color:#569cd6">var</span><span style="color:#d4d4d4"> </span><span style="color:#9cdcfe;opacity:0.6">lobby</span><span style="color:#d4d4d4">:</span><span style="color:#4ec9b0">GameRoom</span><span style="color:#d4d4d4">[]=[];</span></div>
<div class="t" style="left:0;width:64.5px;text-align:right;top:318.37px;letter-spacing:-0.990px;height:28.77px;line-height:28.77px;font-family:'Liberation Mono',monospace;font-size:21.4px;color:#858585">12</div>
<div class="t" style="left:96px;top:318.37px;height:28.77px;line-height:28.77px;font-family:'Liberation Mono',monospace;font-size:21.4px;letter-spacing:-0.990px;"><span style="color:#569cd6">var</span><span style="color:#d4d4d4"> </span><span style="color:#9cdcfe">currentGameRoom</span><span style="color:#d4d4d4">:</span><span style="color:#4ec9b0">GameRoom</span><span style="color:#d4d4d4">;</span></div>
<div class="t" style="left:0;width:64.5px;text-align:right;top:347.14px;letter-spacing:-0.990px;height:28.77px;line-height:28.77px;font-family:'Liberation Mono',monospace;font-size:21.4px;color:#858585">13</div>
<div class="t" style="left:96px;top:347.14px;height:28.77px;line-height:28.77px;font-family:'Liberation Mono',monospace;font-size:21.4px;letter-spacing:-0.990px;"><span style="color:#9cdcfe">io</span><span style="color:#d4d4d4">.</span><span style="color:#dcdcaa">on</span><span style="color:#d4d4d4">(</span><span style="color:#ce9178">"connection"</span><span style="color:#d4d4d4">, </span><span style="color:#569cd6">function</span><span style="color:#d4d4d4">(</span><span style="color:#9cdcfe">socket</span><span style="color:#d4d4d4">: </span><span style="color:#4ec9b0">any</span><span style="color:#d4d4d4">) {</span></div>
<div class="t" style="left:0;width:64.5px;text-align:right;top:375.91px;letter-spacing:-0.990px;height:28.77px;line-height:28.77px;font-family:'Liberation Mono',monospace;font-size:21.4px;color:#858585">14</div>
<div class="a" style="left:96.00px;top:374.01px;width:1px;height:29.27px;background:#404040"></div>
<div class="a" style="left:119.70px;top:374.01px;width:1px;height:29.27px;background:#404040"></div>
<div class="a" style="left:71px;top:374.01px;width:3.6px;height:28.77px;background:#1b81a8"></div>
<div class="t" style="left:96px;top:375.91px;height:28.77px;line-height:28.77px;font-family:'Liberation Mono',monospace;font-size:21.4px;letter-spacing:-0.990px;"><span style="color:#d4d4d4">    </span><span style="color:#4ec9b0">console</span><span style="color:#d4d4d4">.</span><span style="color:#dcdcaa">log</span><span style="color:#d4d4d4">(</span><span style="color:#ce9178">"a user connected"</span><span style="color:#d4d4d4">,</span><span style="color:#9cdcfe">socket</span><span style="color:#d4d4d4">.</span><span style="color:#9cdcfe">id</span><span style="color:#d4d4d4">);</span></div>
<div class="t" style="left:0;width:64.5px;text-align:right;top:404.68px;letter-spacing:-0.990px;height:28.77px;line-height:28.77px;font-family:'Liberation Mono',monospace;font-size:21.4px;color:#858585">15</div>
<div class="a" style="left:96.00px;top:402.78px;width:1px;height:29.27px;background:#404040"></div>
<div class="a" style="left:119.70px;top:402.78px;width:1px;height:29.27px;background:#404040"></div>
<div class="t" style="left:96px;top:404.68px;height:28.77px;line-height:28.77px;font-family:'Liberation Mono',monospace;font-size:21.4px;letter-spacing:-0.990px;"><span style="color:#d4d4d4">   </span><span style="color:#569cd6">let</span><span style="color:#d4d4d4"> </span><span style="color:#9cdcfe">player</span><span style="color:#d4d4d4">:</span><span style="color:#4ec9b0">Player</span><span style="color:#d4d4d4"> ;</span></div>
<div class="t" style="left:0;width:64.5px;text-align:right;top:433.45px;letter-spacing:-0.990px;height:28.77px;line-height:28.77px;font-family:'Liberation Mono',monospace;font-size:21.4px;color:#858585">16</div>
<div class="a" style="left:96.00px;top:431.55px;width:1px;height:29.27px;background:#404040"></div>
<div class="a" style="left:119.70px;top:431.55px;width:1px;height:29.27px;background:#404040"></div>
<div class="a" style="left:71px;top:431.55px;width:3.6px;height:28.77px;background:#1b81a8"></div>
<div class="t" style="left:0;width:64.5px;text-align:right;top:462.22px;letter-spacing:-0.990px;height:28.77px;line-height:28.77px;font-family:'Liberation Mono',monospace;font-size:21.4px;color:#858585">17</div>
<div class="a" style="left:96.00px;top:460.32px;width:1px;height:29.27px;background:#404040"></div>
<div class="a" style="left:119.70px;top:460.32px;width:1px;height:29.27px;background:#404040"></div>
<div class="t" style="left:0;width:64.5px;text-align:right;top:490.99px;letter-spacing:-0.990px;height:28.77px;line-height:28.77px;font-family:'Liberation Mono',monospace;font-size:21.4px;color:#858585">18</div>
<div class="a" style="left:96.00px;top:489.09px;width:1px;height:29.27px;background:#404040"></div>
<div class="a" style="left:71px;top:489.09px;width:3.6px;height:28.77px;background:#1b81a8"></div>
<div class="t" style="left:96px;top:490.99px;height:28.77px;line-height:28.77px;font-family:'Liberation Mono',monospace;font-size:21.4px;letter-spacing:-0.990px;"><span style="color:#d4d4d4">  </span><span style="color:#c586c0">return</span><span style="color:#d4d4d4">;</span></div>
<div class="t" style="left:0;width:64.5px;text-align:right;top:519.76px;letter-spacing:-0.990px;height:28.77px;line-height:28.77px;font-family:'Liberation Mono',monospace;font-size:21.4px;color:#858585">19</div>
<div class="a" style="left:96.00px;top:517.86px;width:1px;height:29.27px;background:#404040"></div>
<div class="a" style="left:119.70px;top:517.86px;width:1px;height:29.27px;background:#404040"></div>
<div class="t" style="left:0;width:64.5px;text-align:right;top:548.53px;letter-spacing:-0.990px;height:28.77px;line-height:28.77px;font-family:'Liberation Mono',monospace;font-size:21.4px;color:#858585">20</div>
<div class="a" style="left:96.00px;top:546.63px;width:1px;height:29.27px;background:#404040"></div>
<div class="a" style="left:119.70px;top:546.63px;width:1px;height:29.27px;background:#404040"></div>
<div class="t" style="left:96px;top:548.53px;height:28.77px;line-height:28.77px;font-family:'Liberation Mono',monospace;font-size:21.4px;letter-spacing:-0.990px;opacity:0.62;"><span style="color:#d4d4d4">    </span><span style="color:#c586c0">if</span><span style="color:#d4d4d4">(</span><span style="color:#9cdcfe">currentGameRoom</span><span style="color:#d4d4d4">==</span><span style="color:#569cd6">null</span><span style="color:#d4d4d4">)</span></div>
<div class="t" style="left:0;width:64.5px;text-align:right;top:577.30px;letter-spacing:-0.990px;height:28.77px;line-height:28.77px;font-family:'Liberation Mono',monospace;font-size:21.4px;color:#858585">21</div>
<div class="a" style="left:96.00px;top:575.40px;width:1px;height:29.27px;background:#404040"></div>
<div class="a" style="left:119.70px;top:575.40px;width:1px;height:29.27px;background:#404040"></div>
<div class="a" style="left:143.40px;top:575.40px;width:1px;height:29.27px;background:#404040"></div>
<div class="a" style="left:167.10px;top:575.40px;width:1px;height:29.27px;background:#404040"></div>
<div class="a" style="left:190.80px;top:575.40px;width:1px;height:29.27px;background:#404040"></div>
<div class="t" style="left:96px;top:577.30px;height:28.77px;line-height:28.77px;font-family:'Liberation Mono',monospace;font-size:21.4px;letter-spacing:-0.990px;opacity:0.62;"><span style="color:#d4d4d4">          </span><span style="color:#9cdcfe">currentGameRoom</span><span style="color:#d4d4d4">= </span><span style="color:#569cd6">new</span><span style="color:#d4d4d4"> </span><span style="color:#4ec9b0">GameRoom</span><span style="color:#d4d4d4">(</span><span style="color:#9cdcfe">io</span><span style="color:#d4d4d4">,</span><span style="color:#9cdcfe">socket</span><span style="color:#d4d4d4">);</span></div>
<div class="t" style="left:0;width:64.5px;text-align:right;top:606.07px;letter-spacing:-0.990px;height:28.77px;line-height:28.77px;font-family:'Liberation Mono',monospace;font-size:21.4px;color:#858585">22</div>
<div class="a" style="left:96.00px;top:604.17px;width:1px;height:29.27px;background:#404040"></div>
<div class="a" style="left:119.70px;top:604.17px;width:1px;height:29.27px;background:#404040"></div>
<div class="a" style="left:143.40px;top:604.17px;width:1px;height:29.27px;background:#404040"></div>
<svg style="left:95px;top:166.6px" width="30" height="30" viewBox="705 270 30 30">
<circle cx="720.2" cy="282" r="5.4" fill="#ffcc00"/>
<path d="M717.1 285 H723.3 V291.2 Q723.3 293.2 720.2 293.2 Q717.1 293.2 717.1 291.2 Z" fill="#ffcc00"/>
<circle cx="720.1" cy="289.9" r="1.05" fill="#1e1e1e"/>
</svg>
<svg style="left:235px;top:21.599999999999994px" width="20" height="8" viewBox="845 125 20 8"><circle cx="850.2" cy="129.2" r="0.85" fill="#bdbdbd"/><circle cx="855.2" cy="129.2" r="0.85" fill="#bdbdbd"/><circle cx="860.2" cy="129.2" r="0.85" fill="#bdbdbd"/></svg>
</div>
<div class="a" style="left:1905px;top:103.4px;width:1px;height:629.6px;background:#3b3b3b"></div>
<div class="a" style="left:1906px;top:155px;width:14px;height:2px;background:#a0a0a0"></div>
<div class="a" style="left:1906px;top:203px;width:5px;height:8px;background:#1b81a8"></div>
<div class="a" style="left:1906px;top:218px;width:5px;height:8px;background:#1b81a8"></div>
<div class="a" style="left:1906px;top:233px;width:5px;height:8px;background:#1b81a8"></div>
<div class="a" style="left:1812px;top:103.4px;width:75px;height:125px;overflow:hidden">
<div class="a" style="left:0.00px;top:0.10px;width:5.52px;height:1.8px;background:#c586c0;opacity:0.37"></div>
<div class="a" style="left:6.79px;top:0.10px;width:0.70px;height:1.8px;background:#569cd6;opacity:0.37"></div>
<div class="a" style="left:8.73px;top:0.10px;width:1.64px;height:1.8px;background:#c586c0;opacity:0.37"></div>
<div class="a" style="left:11.64px;top:0.10px;width:7.46px;height:1.8px;background:#9cdcfe;opacity:0.37"></div>
<div class="a" style="left:20.37px;top:0.10px;width:3.58px;height:1.8px;background:#c586c0;opacity:0.37"></div>
<div class="a" style="left:25.22px;top:0.10px;width:10.37px;height:1.8px;background:#ce9178;opacity:0.37"></div>
<div class="a" style="left:35.89px;top:0.10px;width:0.70px;height:1.8px;background:#d4d4d4;opacity:0.37"></div>
<div class="a" style="left:0.00px;top:2.12px;width:5.52px;height:1.8px;background:#c586c0;opacity:0.37"></div>
<div class="a" style="left:6.79px;top:2.12px;width:7.46px;height:1.8px;background:#9cdcfe;opacity:0.37"></div>
<div class="a" style="left:15.52px;top:2.12px;width:3.58px;height:1.8px;background:#c586c0;opacity:0.37"></div>
<div class="a" style="left:20.37px;top:2.12px;width:20.07px;height:1.8px;background:#ce9178;opacity:0.37"></div>
<div class="a" style="left:0.00px;top:4.14px;width:5.52px;height:1.8px;background:#c586c0;opacity:0.62"></div>
<div class="a" style="left:6.79px;top:4.14px;width:5.52px;height:1.8px;background:#9cdcfe;opacity:0.62"></div>
<div class="a" style="left:13.58px;top:4.14px;width:3.58px;height:1.8px;background:#c586c0;opacity:0.62"></div>
<div class="a" style="left:18.43px;top:4.14px;width:18.13px;height:1.8px;background:#ce9178;opacity:0.62"></div>
<div class="a" style="left:36.86px;top:4.14px;width:0.70px;height:1.8px;background:#d4d4d4;opacity:0.62"></div>
<div class="a" style="left:0.00px;top:6.16px;width:5.52px;height:1.8px;background:#c586c0;opacity:0.62"></div>
<div class="a" style="left:6.79px;top:6.16px;width:7.46px;height:1.8px;background:#9cdcfe;opacity:0.62"></div>
<div class="a" style="left:15.52px;top:6.16px;width:3.58px;height:1.8px;background:#c586c0;opacity:0.62"></div>
<div class="a" style="left:20.37px;top:6.16px;width:11.34px;height:1.8px;background:#ce9178;opacity:0.62"></div>
<div class="a" style="left:32.01px;top:6.16px;width:0.70px;height:1.8px;background:#d4d4d4;opacity:0.62"></div>
<div class="a" style="left:0.00px;top:10.20px;width:6.49px;height:1.8px;background:#4ec9b0;opacity:0.62"></div>
<div class="a" style="left:6.79px;top:10.20px;width:0.70px;height:1.8px;background:#d4d4d4;opacity:0.62"></div>
<div class="a" style="left:7.76px;top:10.20px;width:2.61px;height:1.8px;background:#dcdcaa;opacity:0.62"></div>
<div class="a" style="left:10.67px;top:10.20px;width:0.70px;height:1.8px;background:#d4d4d4;opacity:0.62"></div>
<div class="a" style="left:11.64px;top:10.20px;width:5.52px;height:1.8px;background:#ce9178;opacity:0.62"></div>
<div class="a" style="left:18.43px;top:10.20px;width:2.61px;height:1.8px;background:#ce9178;opacity:0.62"></div>
<div class="a" style="left:22.31px;top:10.20px;width:7.46px;height:1.8px;background:#ce9178;opacity:0.62"></div>
<div class="a" style="left:30.07px;top:10.20px;width:1.64px;height:1.8px;background:#d4d4d4;opacity:0.62"></div>
<div class="a" style="left:0.00px;top:14.24px;width:2.61px;height:1.8px;background:#569cd6;opacity:0.62"></div>
<div class="a" style="left:3.88px;top:14.24px;width:1.64px;height:1.8px;background:#9cdcfe;opacity:0.62"></div>
<div class="a" style="left:5.82px;top:14.24px;width:0.70px;height:1.8px;background:#d4d4d4;opacity:0.62"></div>
<div class="a" style="left:6.79px;top:14.24px;width:6.49px;height:1.8px;background:#dcdcaa;opacity:0.62"></div>
<div class="a" style="left:13.58px;top:14.24px;width:0.70px;height:1.8px;background:#d4d4d4;opacity:0.62"></div>
<div class="a" style="left:14.55px;top:14.24px;width:10.37px;height:1.8px;background:#ce9178;opacity:0.62"></div>
<div class="a" style="left:25.22px;top:14.24px;width:1.64px;height:1.8px;background:#d4d4d4;opacity:0.62"></div>
<div class="a" style="left:27.16px;top:14.24px;width:6.49px;height:1.8px;background:#9cdcfe;opacity:0.62"></div>
<div class="a" style="left:33.95px;top:14.24px;width:0.70px;height:1.8px;background:#d4d4d4;opacity:0.62"></div>
<div class="a" style="left:34.92px;top:14.24px;width:2.61px;height:1.8px;background:#9cdcfe;opacity:0.62"></div>
<div class="a" style="left:37.83px;top:14.24px;width:0.70px;height:1.8px;background:#d4d4d4;opacity:0.62"></div>
<div class="a" style="left:38.80px;top:14.24px;width:3.58px;height:1.8px;background:#9cdcfe;opacity:0.62"></div>
<div class="a" style="left:43.65px;top:14.24px;width:1.64px;height:1.8px;background:#d4d4d4;opacity:0.62"></div>
<div class="a" style="left:46.56px;top:14.24px;width:4.55px;height:1.8px;background:#b5cea8;opacity:0.62"></div>
<div class="a" style="left:51.41px;top:14.24px;width:1.64px;height:1.8px;background:#d4d4d4;opacity:0.62"></div>
<div class="a" style="left:0.00px;top:18.28px;width:2.61px;height:1.8px;background:#569cd6;opacity:0.62"></div>
<div class="a" style="left:3.88px;top:18.28px;width:15.22px;height:1.8px;background:#9cdcfe;opacity:0.62"></div>
<div class="a" style="left:19.40px;top:18.28px;width:0.70px;height:1.8px;background:#d4d4d4;opacity:0.62"></div>
<div class="a" style="left:20.37px;top:18.28px;width:5.52px;height:1.8px;background:#4ec9b0;opacity:0.62"></div>
<div class="a" style="left:26.19px;top:18.28px;width:5.52px;height:1.8px;background:#d4d4d4;opacity:0.62"></div>
<div class="a" style="left:0.00px;top:20.30px;width:2.61px;height:1.8px;background:#569cd6;opacity:0.62"></div>
<div class="a" style="left:3.88px;top:20.30px;width:4.55px;height:1.8px;background:#9cdcfe;opacity:0.62"></div>
<div class="a" style="left:8.73px;top:20.30px;width:0.70px;height:1.8px;background:#d4d4d4;opacity:0.62"></div>
<div class="a" style="left:9.70px;top:20.30px;width:7.46px;height:1.8px;background:#4ec9b0;opacity:0.62"></div>
<div class="a" style="left:17.46px;top:20.30px;width:5.52px;height:1.8px;background:#d4d4d4;opacity:0.62"></div>
<div class="a" style="left:0.00px;top:22.32px;width:2.61px;height:1.8px;background:#569cd6;opacity:0.62"></div>
<div class="a" style="left:3.88px;top:22.32px;width:14.25px;height:1.8px;background:#9cdcfe;opacity:0.62"></div>
<div class="a" style="left:18.43px;top:22.32px;width:0.70px;height:1.8px;background:#d4d4d4;opacity:0.62"></div>
<div class="a" style="left:19.40px;top:22.32px;width:7.46px;height:1.8px;background:#4ec9b0;opacity:0.62"></div>
<div class="a" style="left:27.16px;top:22.32px;width:0.70px;height:1.8px;background:#d4d4d4;opacity:0.62"></div>
<div class="a" style="left:0.00px;top:24.34px;width:1.64px;height:1.8px;background:#9cdcfe;opacity:0.62"></div>
<div class="a" style="left:1.94px;top:24.34px;width:0.70px;height:1.8px;background:#d4d4d4;opacity:0.62"></div>
<div class="a" style="left:2.91px;top:24.34px;width:1.64px;height:1.8px;background:#dcdcaa;opacity:0.62"></div>
<div class="a" style="left:4.85px;top:24.34px;width:0.70px;height:1.8px;background:#d4d4d4;opacity:0.62"></div>
<div class="a" style="left:5.82px;top:24.34px;width:11.34px;height:1.8px;background:#ce9178;opacity:0.62"></div>
<div class="a" style="left:17.46px;top:24.34px;width:0.70px;height:1.8px;background:#d4d4d4;opacity:0.62"></div>
<div class="a" style="left:19.40px;top:24.34px;width:7.46px;height:1.8px;background:#569cd6;opacity:0.62"></div>
<div class="a" style="left:27.16px;top:24.34px;width:0.70px;height:1.8px;background:#d4d4d4;opacity:0.62"></div>
<div class="a" style="left:28.13px;top:24.34px;width:5.52px;height:1.8px;background:#9cdcfe;opacity:0.62"></div>
<div class="a" style="left:33.95px;top:24.34px;width:0.70px;height:1.8px;background:#d4d4d4;opacity:0.62"></div>
<div class="a" style="left:35.89px;top:24.34px;width:2.61px;height:1.8px;background:#4ec9b0;opacity:0.62"></div>
<div class="a" style="left:38.80px;top:24.34px;width:0.70px;height:1.8px;background:#d4d4d4;opacity:0.62"></div>
<div class="a" style="left:40.74px;top:24.34px;width:0.70px;height:1.8px;background:#d4d4d4;opacity:0.62"></div>
<div class="a" style="left:3.88px;top:26.36px;width:6.49px;height:1.8px;background:#4ec9b0;opacity:0.62"></div>
<div class="a" style="left:10.67px;top:26.36px;width:0.70px;height:1.8px;background:#d4d4d4;opacity:0.62"></div>
<div class="a" style="left:11.64px;top:26.36px;width:2.61px;height:1.8px;background:#dcdcaa;opacity:0.62"></div>
<div class="a" style="left:14.55px;top:26.36px;width:0.70px;height:1.8px;background:#d4d4d4;opacity:0.62"></div>
<div class="a" style="left:15.52px;top:26.36px;width:1.64px;height:1.8px;background:#ce9178;opacity:0.62"></div>
<div class="a" style="left:18.43px;top:26.36px;width:3.58px;height:1.8px;background:#ce9178;opacity:0.62"></div>
<div class="a" style="left:23.28px;top:26.36px;width:9.40px;height:1.8px;background:#ce9178;opacity:0.62"></div>
<div class="a" style="left:32.98px;top:26.36px;width:0.70px;height:1.8px;background:#d4d4d4;opacity:0.62"></div>
<div class="a" style="left:33.95px;top:26.36px;width:5.52px;height:1.8px;background:#9cdcfe;opacity:0.62"></div>
<div class="a" style="left:39.77px;top:26.36px;width:0.70px;height:1.8px;background:#d4d4d4;opacity:0.62"></div>
<div class="a" style="left:40.74px;top:26.36px;width:1.64px;height:1.8px;background:#9cdcfe;opacity:0.62"></div>
<div class="a" style="left:42.68px;top:26.36px;width:1.64px;height:1.8px;background:#d4d4d4;opacity:0.62"></div>
<div class="a" style="left:2.91px;top:28.38px;width:2.61px;height:1.8px;background:#569cd6;opacity:0.62"></div>
<div class="a" style="left:6.79px;top:28.38px;width:5.52px;height:1.8px;background:#9cdcfe;opacity:0.62"></div>
<div class="a" style="left:12.61px;top:28.38px;width:0.70px;height:1.8px;background:#d4d4d4;opacity:0.62"></div>
<div class="a" style="left:13.58px;top:28.38px;width:5.52px;height:1.8px;background:#4ec9b0;opacity:0.62"></div>
<div class="a" style="left:20.37px;top:28.38px;width:0.70px;height:1.8px;background:#d4d4d4;opacity:0.62"></div>
<div class="a" style="left:1.94px;top:34.44px;width:5.52px;height:1.8px;background:#c586c0;opacity:0.62"></div>
<div class="a" style="left:7.76px;top:34.44px;width:0.70px;height:1.8px;background:#d4d4d4;opacity:0.62"></div>
<div class="a" style="left:3.88px;top:38.48px;width:1.64px;height:1.8px;background:#c586c0;opacity:0.37"></div>
<div class="a" style="left:5.82px;top:38.48px;width:0.70px;height:1.8px;background:#d4d4d4;opacity:0.37"></div>
<div class="a" style="left:6.79px;top:38.48px;width:14.25px;height:1.8px;background:#9cdcfe;opacity:0.37"></div>
<div class="a" style="left:21.34px;top:38.48px;width:1.64px;height:1.8px;background:#d4d4d4;opacity:0.37"></div>
<div class="a" style="left:23.28px;top:38.48px;width:3.58px;height:1.8px;background:#569cd6;opacity:0.37"></div>
<div class="a" style="left:27.16px;top:38.48px;width:0.70px;height:1.8px;background:#d4d4d4;opacity:0.37"></div>
<div class="a" style="left:9.70px;top:40.50px;width:14.25px;height:1.8px;background:#9cdcfe;opacity:0.37"></div>
<div class="a" style="left:24.25px;top:40.50px;width:0.70px;height:1.8px;background:#d4d4d4;opacity:0.37"></div>
<div class="a" style="left:26.19px;top:40.50px;width:2.61px;height:1.8px;background:#569cd6;opacity:0.37"></div>
<div class="a" style="left:30.07px;top:40.50px;width:7.46px;height:1.8px;background:#4ec9b0;opacity:0.37"></div>
<div class="a" style="left:37.83px;top:40.50px;width:0.70px;height:1.8px;background:#d4d4d4;opacity:0.37"></div>
<div class="a" style="left:38.80px;top:40.50px;width:1.64px;height:1.8px;background:#9cdcfe;opacity:0.37"></div>
<div class="a" style="left:40.74px;top:40.50px;width:0.70px;height:1.8px;background:#d4d4d4;opacity:0.37"></div>
<div class="a" style="left:41.71px;top:40.50px;width:5.52px;height:1.8px;background:#9cdcfe;opacity:0.37"></div>
<div class="a" style="left:47.53px;top:40.50px;width:1.64px;height:1.8px;background:#d4d4d4;opacity:0.37"></div>
<div class="a" style="left:3.88px;top:44.54px;width:2.61px;height:1.8px;background:#c586c0;opacity:0.62"></div>
<div class="a" style="left:6.79px;top:44.54px;width:15.22px;height:1.8px;background:#9cdcfe;opacity:0.62"></div>
<div class="a" style="left:22.31px;top:44.54px;width:0.70px;height:1.8px;background:#d4d4d4;opacity:0.62"></div>
<div class="a" style="left:23.28px;top:44.54px;width:8.43px;height:1.8px;background:#dcdcaa;opacity:0.62"></div>
<div class="a" style="left:32.01px;top:44.54px;width:3.58px;height:1.8px;background:#d4d4d4;opacity:0.62"></div>
<div class="a" style="left:5.82px;top:46.56px;width:14.25px;height:1.8px;background:#9cdcfe;opacity:0.62"></div>
<div class="a" style="left:20.37px;top:46.56px;width:1.64px;height:1.8px;background:#d4d4d4;opacity:0.62"></div>
<div class="a" style="left:22.31px;top:46.56px;width:2.61px;height:1.8px;background:#569cd6;opacity:0.62"></div>
<div class="a" style="left:26.19px;top:46.56px;width:7.46px;height:1.8px;background:#4ec9b0;opacity:0.62"></div>
<div class="a" style="left:33.95px;top:46.56px;width:11.34px;height:1.8px;background:#d4d4d4;opacity:0.62"></div>
<div class="a" style="left:3.88px;top:50.60px;width:5.52px;height:1.8px;background:#9cdcfe;opacity:0.62"></div>
<div class="a" style="left:9.70px;top:50.60px;width:0.70px;height:1.8px;background:#d4d4d4;opacity:0.62"></div>
<div class="a" style="left:10.67px;top:50.60px;width:1.64px;height:1.8px;background:#dcdcaa;opacity:0.62"></div>
<div class="a" style="left:12.61px;top:50.60px;width:0.70px;height:1.8px;background:#d4d4d4;opacity:0.62"></div>
<div class="a" style="left:13.58px;top:50.60px;width:17.16px;height:1.8px;background:#ce9178;opacity:0.62"></div>
<div class="a" style="left:32.01px;top:50.60px;width:0.70px;height:1.8px;background:#d4d4d4;opacity:0.62"></div>
<div class="a" style="left:32.98px;top:50.60px;width:7.46px;height:1.8px;background:#569cd6;opacity:0.62"></div>
<div class="a" style="left:40.74px;top:50.60px;width:9.40px;height:1.8px;background:#d4d4d4;opacity:0.62"></div>
<div class="a" style="left:3.88px;top:52.62px;width:2.61px;height:1.8px;background:#d4d4d4;opacity:0.62"></div>
<div class="a" style="left:3.88px;top:56.66px;width:5.52px;height:1.8px;background:#9cdcfe;opacity:0.62"></div>
<div class="a" style="left:9.70px;top:56.66px;width:0.70px;height:1.8px;background:#d4d4d4;opacity:0.62"></div>
<div class="a" style="left:10.67px;top:56.66px;width:1.64px;height:1.8px;background:#dcdcaa;opacity:0.62"></div>
<div class="a" style="left:12.61px;top:56.66px;width:0.70px;height:1.8px;background:#d4d4d4;opacity:0.62"></div>
<div class="a" style="left:13.58px;top:56.66px;width:17.16px;height:1.8px;background:#ce9178;opacity:0.62"></div>
<div class="a" style="left:32.01px;top:56.66px;width:0.70px;height:1.8px;background:#d4d4d4;opacity:0.62"></div>
<div class="a" style="left:32.98px;top:56.66px;width:7.46px;height:1.8px;background:#569cd6;opacity:0.62"></div>
<div class="a" style="left:40.74px;top:56.66px;width:9.40px;height:1.8px;background:#d4d4d4;opacity:0.62"></div>
<div class="a" style="left:6.79px;top:58.68px;width:2.61px;height:1.8px;background:#569cd6;opacity:0.62"></div>
<div class="a" style="left:10.67px;top:58.68px;width:7.46px;height:1.8px;background:#9cdcfe;opacity:0.62"></div>
<div class="a" style="left:6.79px;top:60.70px;width:5.52px;height:1.8px;background:#9cdcfe;opacity:0.62"></div>
<div class="a" style="left:13.58px;top:60.70px;width:1.64px;height:1.8px;background:#d4d4d4;opacity:0.62"></div>
<div class="a" style="left:15.52px;top:60.70px;width:8.43px;height:1.8px;background:#ce9178;opacity:0.62"></div>
<div class="a" style="left:24.25px;top:60.70px;width:7.46px;height:1.8px;background:#9cdcfe;opacity:0.62"></div>
<div class="a" style="left:5.82px;top:62.72px;width:6.49px;height:1.8px;background:#4ec9b0;opacity:0.62"></div>
<div class="a" style="left:13.58px;top:62.72px;width:2.61px;height:1.8px;background:#dcdcaa;opacity:0.62"></div>
<div class="a" style="left:17.46px;top:62.72px;width:15.22px;height:1.8px;background:#ce9178;opacity:0.62"></div>
<div class="a" style="left:33.95px;top:62.72px;width:3.58px;height:1.8px;background:#d4d4d4;opacity:0.62"></div>
<div class="a" style="left:5.82px;top:66.76px;width:1.64px;height:1.8px;background:#c586c0;opacity:0.62"></div>
<div class="a" style="left:8.73px;top:66.76px;width:15.22px;height:1.8px;background:#9cdcfe;opacity:0.62"></div>
<div class="a" style="left:25.22px;top:66.76px;width:19.10px;height:1.8px;background:#d4d4d4;opacity:0.62"></div>
<div class="a" style="left:5.82px;top:68.78px;width:0.70px;height:1.8px;background:#d4d4d4;opacity:0.62"></div>
<div class="a" style="left:8.73px;top:70.80px;width:6.49px;height:1.8px;background:#d4d4d4;opacity:0.62"></div>
<div class="a" style="left:16.49px;top:70.80px;width:8.43px;height:1.8px;background:#ce9178;opacity:0.62"></div>
<div class="a" style="left:26.19px;top:70.80px;width:5.52px;height:1.8px;background:#9cdcfe;opacity:0.62"></div>
<div class="a" style="left:9.70px;top:72.82px;width:21.04px;height:1.8px;background:#9cdcfe;opacity:0.62"></div>
<div class="a" style="left:32.01px;top:72.82px;width:17.16px;height:1.8px;background:#d4d4d4;opacity:0.62"></div>
<div class="a" style="left:49.47px;top:72.82px;width:10.37px;height:1.8px;background:#dcdcaa;opacity:0.62"></div>
<div class="a" style="left:61.11px;top:72.82px;width:8.43px;height:1.8px;background:#d4d4d4;opacity:0.62"></div>
<div class="a" style="left:8.73px;top:76.86px;width:8.43px;height:1.8px;background:#dcdcaa;opacity:0.62"></div>
<div class="a" style="left:18.43px;top:76.86px;width:7.46px;height:1.8px;background:#9cdcfe;opacity:0.62"></div>
<div class="a" style="left:9.70px;top:80.90px;width:6.49px;height:1.8px;background:#c586c0;opacity:0.62"></div>
<div class="a" style="left:5.82px;top:82.92px;width:0.70px;height:1.8px;background:#d4d4d4;opacity:0.62"></div>
<div class="a" style="left:5.82px;top:86.96px;width:9.40px;height:1.8px;background:#dcdcaa;opacity:0.62"></div>
<div class="a" style="left:15.52px;top:86.96px;width:6.49px;height:1.8px;background:#9cdcfe;opacity:0.62"></div>
<div class="a" style="left:3.88px;top:91.00px;width:2.61px;height:1.8px;background:#d4d4d4;opacity:0.62"></div>
<div class="a" style="left:4.85px;top:99.08px;width:5.52px;height:1.8px;background:#9cdcfe;opacity:0.62"></div>
<div class="a" style="left:11.64px;top:99.08px;width:1.64px;height:1.8px;background:#dcdcaa;opacity:0.62"></div>
<div class="a" style="left:15.52px;top:99.08px;width:10.37px;height:1.8px;background:#ce9178;opacity:0.62"></div>
<div class="a" style="left:27.16px;top:99.08px;width:5.52px;height:1.8px;background:#d4d4d4;opacity:0.62"></div>
<div class="a" style="left:5.82px;top:101.10px;width:6.49px;height:1.8px;background:#4ec9b0;opacity:0.62"></div>
<div class="a" style="left:13.58px;top:101.10px;width:2.61px;height:1.8px;background:#dcdcaa;opacity:0.62"></div>
<div class="a" style="left:18.43px;top:101.10px;width:17.16px;height:1.8px;background:#ce9178;opacity:0.62"></div>
<div class="a" style="left:35.89px;top:101.10px;width:1.64px;height:1.8px;background:#d4d4d4;opacity:0.62"></div>
<div class="a" style="left:5.82px;top:103.12px;width:1.64px;height:1.8px;background:#c586c0;opacity:0.62"></div>
<div class="a" style="left:8.73px;top:103.12px;width:6.49px;height:1.8px;background:#9cdcfe;opacity:0.62"></div>
<div class="a" style="left:15.52px;top:103.12px;width:5.52px;height:1.8px;background:#d4d4d4;opacity:0.62"></div>
<div class="a" style="left:5.82px;top:105.14px;width:0.70px;height:1.8px;background:#d4d4d4;opacity:0.62"></div>
<div class="a" style="left:7.76px;top:107.16px;width:5.52px;height:1.8px;background:#9cdcfe;opacity:0.62"></div>
<div class="a" style="left:14.55px;top:107.16px;width:7.46px;height:1.8px;background:#dcdcaa;opacity:0.62"></div>
<div class="a" style="left:23.28px;top:107.16px;width:10.37px;height:1.8px;background:#ce9178;opacity:0.62"></div>
<div class="a" style="left:34.92px;top:107.16px;width:1.64px;height:1.8px;background:#d4d4d4;opacity:0.62"></div>
<div class="a" style="left:7.76px;top:109.18px;width:6.49px;height:1.8px;background:#9cdcfe;opacity:0.62"></div>
<div class="a" style="left:15.52px;top:109.18px;width:14.25px;height:1.8px;background:#d4d4d4;opacity:0.62"></div>
<div class="a" style="left:31.04px;top:109.18px;width:6.49px;height:1.8px;background:#9cdcfe;opacity:0.62"></div>
<div class="a" style="left:38.80px;top:109.18px;width:3.58px;height:1.8px;background:#d4d4d4;opacity:0.62"></div>
<div class="a" style="left:5.82px;top:111.20px;width:0.70px;height:1.8px;background:#d4d4d4;opacity:0.62"></div>
<div class="a" style="left:4.85px;top:115.24px;width:2.61px;height:1.8px;background:#d4d4d4;opacity:0.62"></div>
<div class="a" style="left:1.94px;top:121.30px;width:2.61px;height:1.8px;background:#d4d4d4;opacity:0.62"></div>
</div>
<div class="a" style="left:610px;top:733px;width:1310px;height:280px;background:#1e1e1e;border-top:1px solid #474747"></div>
<div class="t s" style="left:633.02px;top:748.91px;font-family:'Liberation Sans',sans-serif;font-size:13.4px;line-height:13.4px;color:#8f8f8f;transform:scaleX(0.8750);transform-origin:0 0;">PROBLEMS</div>
<div class="t s" style="left:722.00px;top:748.91px;font-family:'Liberation Sans',sans-serif;font-size:13.4px;line-height:13.4px;color:#8f8f8f;transform:scaleX(0.9022);transform-origin:0 0;">OUTPUT</div>
<div class="t s" style="left:794.71px;top:748.91px;font-family:'Liberation Sans',sans-serif;font-size:13.4px;line-height:13.4px;color:#8f8f8f;transform:scaleX(0.8853);transform-origin:0 0;">DEBUG CONSOLE</div>
<div class="t s" style="left:922.40px;top:748.91px;font-family:'Liberation Sans',sans-serif;font-size:13.4px;line-height:13.4px;color:#e7e7e7;transform:scaleX(0.9159);transform-origin:0 0;">TERMINAL</div>
<div class="a" style="left:922.4px;top:771.8px;width:61.6px;height:1px;background:#7a7a7a"></div>
<div class="a" style="left:1525px;top:743px;width:192px;height:25px;background:#3c3c3c"></div>
<div class="t s" style="left:1530.38px;top:748.54px;font-family:'Liberation Sans',sans-serif;font-size:15.6px;line-height:15.6px;color:#f0f0f0;transform:scaleX(1.0208);transform-origin:0 0;">1: node</div>
<svg style="left:1700px;top:751px" width="10" height="9" viewBox="0 0 10 9"><path d="M1.4 1 H9 L5.2 7.8 Z" fill="#f0f0f0"/></svg>
<svg style="left:1730px;top:740px" width="190" height="30" viewBox="1730 740 190 30">
<path d="M1745 747 V763.1 M1737 755.1 H1753" stroke="#c5c5c5" stroke-width="1.2"/>
<rect x="1777.8" y="747.6" width="15" height="15" rx="1.8" fill="none" stroke="#c5c5c5" stroke-width="1.2"/>
<path d="M1785.3 747.6 V762.6" stroke="#c5c5c5" stroke-width="1.2"/>
<path d="M1815 750.3 H1829 M1819 750.3 V747.8 H1825 V750.3" fill="none" stroke="#c5c5c5" stroke-width="1.2"/>
<path d="M1816.6 750.5 V761 Q1816.6 762.6 1818.2 762.6 H1825.8 Q1827.4 762.6 1827.4 761 V750.5" fill="none" stroke="#c5c5c5" stroke-width="1.2"/>
<path d="M1820 752.5 V760.5 M1822 752.5 V760.5 M1824 752.5 V760.5" stroke="#c5c5c5" stroke-width="0.9"/>
<path d="M1854.9 759.2 L1861.6 752.2 L1868.3 759.2" fill="none" stroke="#c5c5c5" stroke-width="1.2"/>
<path d="M1894.4 750.8 L1904.8 760.8 M1904.8 750.8 L1894.4 760.8" stroke="#c5c5c5" stroke-width="1.2"/>
</svg>
<div class="t" style="left:634.00px;top:794.14px;font-family:'Liberation Mono',monospace;font-size:16px;line-height:16px;color:#cccccc;letter-spacing:-0.600px"><span style="color:#cccccc">PS D:\Projects\Mobile\ColorBattleI\Dev\Server&gt; </span><span style="color:#f5f543">nodemon</span></div>
<div class="t" style="left:634.00px;top:814.14px;font-family:'Liberation Mono',monospace;font-size:16px;line-height:16px;color:#cccccc;letter-spacing:-0.600px"><span style="color:#e5e510">[nodemon] 1.19.1</span></div>
<div class="t" style="left:634.00px;top:834.14px;font-family:'Liberation Mono',monospace;font-size:16px;line-height:16px;color:#cccccc;letter-spacing:-0.600px"><span style="color:#e5e510">[nodemon] to restart at any time, enter `rs`</span></div>
<div class="t" style="left:634.00px;top:854.14px;font-family:'Liberation Mono',monospace;font-size:16px;line-height:16px;color:#cccccc;letter-spacing:-0.600px"><span style="color:#e5e510">[nodemon] watching: *.*</span></div>
<div class="t" style="left:634.00px;top:874.14px;font-family:'Liberation Mono',monospace;font-size:16px;line-height:16px;color:#cccccc;letter-spacing:-0.600px"><span style="color:#0dbc79">[nodemon] starting `ts-node index.ts`</span></div>
<div class="t" style="left:634.00px;top:894.14px;font-family:'Liberation Mono',monospace;font-size:16px;line-height:16px;color:#cccccc;letter-spacing:-0.600px"><span style="color:#cccccc">Sever has started</span></div>
<div class="t" style="left:634.00px;top:914.14px;font-family:'Liberation Mono',monospace;font-size:16px;line-height:16px;color:#cccccc;letter-spacing:-0.600px"><span style="color:#cccccc">a user connected 1lxfm1lrdNAARaWEAAAA</span></div>
<div class="a" style="left:634px;top:931px;width:9px;height:20px;background:#cccccc"></div>
<div class="a" style="left:1909px;top:987px;width:11px;height:25px;background:#424242"></div>
<div class="a" style="left:0;top:1013px;width:1920px;height:26px;background:#007acc"></div>
<div class="a" style="left:0;top:1039px;width:1920px;height:1px;background:#000000"></div>
<svg style="left:14px;top:1018px" width="16" height="18" viewBox="0 0 16 18">
<circle cx="3.3" cy="2.6" r="1.7" fill="none" stroke="#fff" stroke-width="1.3"/>
<circle cx="3.3" cy="15.2" r="1.7" fill="none" stroke="#fff" stroke-width="1.3"/>
<circle cx="11.3" cy="5.0" r="1.7" fill="none" stroke="#fff" stroke-width="1.3"/>
<path d="M3.3 4.3 V13.5 M11.3 6.7 Q11.3 10.5 3.8 12.8" fill="none" stroke="#fff" stroke-width="1.3"/>
</svg>
<div class="t s" style="left:31.20px;top:1019.76px;font-family:'Liberation Sans',sans-serif;font-size:14.4px;line-height:14.4px;color:#ffffff;transform:scaleX(0.9824);transform-origin:0 0;">master*</div>
<svg style="left:99px;top:1019px" width="20" height="15" viewBox="0 0 20 15">
<path d="M6 11.5 H4.5 Q0.8 11.5 0.8 8.2 Q0.8 5 4 5 Q4.8 1 9.5 1 Q14 1 15 4.8 Q18.8 5 18.8 8.3 Q18.8 11.5 15.5 11.5 H13.5" fill="none" stroke="#fff" stroke-width="1.4"/>
<path d="M9.8 14.5 V7 M6.8 9.5 L9.8 6.3 L12.8 9.5" fill="none" stroke="#fff" stroke-width="1.6"/>
</svg>
<svg style="left:136px;top:1018px" width="17" height="17" viewBox="0 0 17 17">
<circle cx="8.2" cy="8.5" r="7.9" fill="#fff"/>
<path d="M5.3 5.6 L11.1 11.4 M11.1 5.6 L5.3 11.4" stroke="#007acc" stroke-width="1.7"/>
</svg>
<div class="t s" style="left:156.80px;top:1019.76px;font-family:'Liberation Sans',sans-serif;font-size:14.4px;line-height:14.4px;color:#ffffff;transform:scaleX(0.9500);transform-origin:0 0;">0</div>
<svg style="left:169px;top:1018px" width="17" height="17" viewBox="0 0 17 17">
<path d="M8 0.8 L15.6 15.3 H0.4 Z" fill="#fff"/>
<path d="M8 5.5 V11" stroke="#007acc" stroke-width="1.6"/>
<rect x="7.2" y="12" width="1.6" height="1.6" fill="#007acc"/>
</svg>
<div class="t s" style="left:188.60px;top:1019.76px;font-family:'Liberation Sans',sans-serif;font-size:14.4px;line-height:14.4px;color:#ffffff;">0</div>
<div class="t s" style="left:1284.84px;top:1019.76px;font-family:'Liberation Sans',sans-serif;font-size:14.4px;line-height:14.4px;color:#ffffff;transform:scaleX(0.9633);transform-origin:0 0;">Ln 8, Col 54 (5 selected)</div>
<div class="t s" style="left:1454.60px;top:1019.76px;font-family:'Liberation Sans',sans-serif;font-size:14.4px;line-height:14.4px;color:#ffffff;transform:scaleX(0.9188);transform-origin:0 0;">Spaces: 2</div>
<div class="t s" style="left:1531.55px;top:1019.76px;font-family:'Liberation Sans',sans-serif;font-size:14.4px;line-height:14.4px;color:#ffffff;transform:scaleX(0.9531);transform-origin:0 0;">UTF-8</div>
<div class="t s" style="left:1589.90px;top:1019.76px;font-family:'Liberation Sans',sans-serif;font-size:14.4px;line-height:14.4px;color:#ffffff;transform:scaleX(0.8230);transform-origin:0 0;">CRLF</div>
<div class="t s" style="left:1640.80px;top:1019.76px;font-family:'Liberation Sans',sans-serif;font-size:14.4px;line-height:14.4px;color:#ffffff;transform:scaleX(0.9590);transform-origin:0 0;">TypeScript</div>
<div class="t s" style="left:1725.80px;top:1019.76px;font-family:'Liberation Sans',sans-serif;font-size:14.4px;line-height:14.4px;color:#ffffff;transform:scaleX(0.9187);transform-origin:0 0;">3.5.2</div>
<div class="t s" style="left:1794.90px;top:1019.76px;font-family:'Liberation Sans',sans-serif;font-size:14.4px;line-height:14.4px;color:#ffffff;transform:scaleX(0.9184);transform-origin:0 0;">TSLint</div>
<svg style="left:1774px;top:1018px" width="18" height="17" viewBox="0 0 18 17">
<path d="M9 0.8 L17.3 15.5 H0.7 Z" fill="#fff"/>
<path d="M9 5.5 V11" stroke="#007acc" stroke-width="1.7"/>
<rect x="8.1" y="12" width="1.8" height="1.8" fill="#007acc"/>
</svg>
<svg style="left:1853px;top:1018px" width="17" height="17" viewBox="0 0 17 17">
<circle cx="8.2" cy="8.5" r="7.9" fill="#fff"/>
<circle cx="5.6" cy="6.5" r="1.2" fill="#007acc"/><circle cx="10.8" cy="6.5" r="1.2" fill="#007acc"/>
<path d="M4.3 9.6 Q8.2 13.6 12.1 9.6" fill="none" stroke="#007acc" stroke-width="1.4"/>
</svg>
<svg style="left:1887px;top:1018px" width="17" height="17" viewBox="0 0 17 17">
<path d="M8.3 0.8 Q13.5 1.5 13.6 7 V10.3 L15.3 12.5 H1.3 L3 10.3 V7 Q3.1 1.5 8.3 0.8 Z" fill="#fff"/>
<path d="M6.3 13.6 H10.3 Q9.8 15.6 8.3 15.6 Q6.8 15.6 6.3 13.6 Z" fill="#fff"/>
</svg>
</body></html>
